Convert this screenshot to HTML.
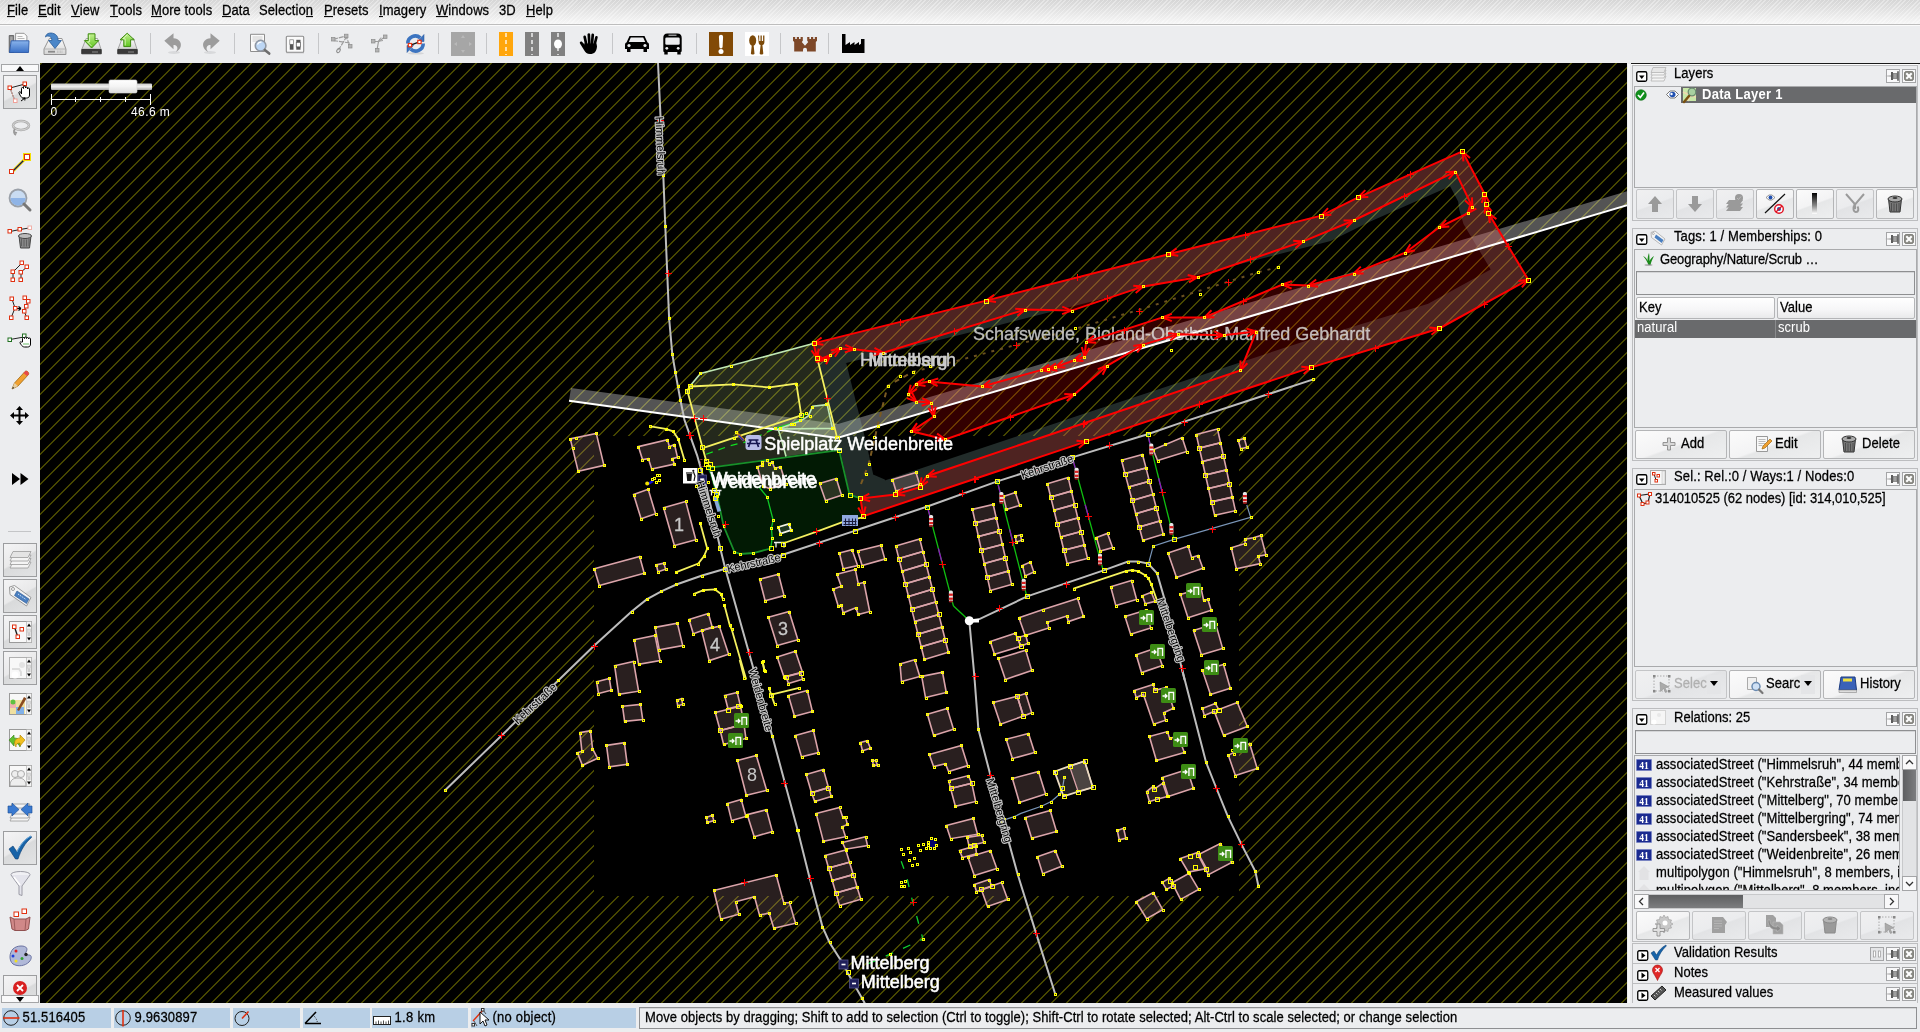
<!DOCTYPE html>
<html lang="en"><head><meta charset="utf-8"><title>Java OpenStreetMap Editor</title>
<style>
*{box-sizing:border-box}
html,body{margin:0;padding:0}
body{-webkit-text-stroke:.25px;width:1920px;height:1032px;overflow:hidden;background:#ecedef;font-family:"Liberation Sans",sans-serif;font-size:13px;color:#000;position:relative}
.a{position:absolute}
.t{position:absolute;white-space:nowrap;line-height:16px;height:16px;letter-spacing:.06px;transform:scaleY(1.06);transform-origin:0 12.300px}
u{text-decoration:none;border-bottom:1px solid #000;display:inline-block;line-height:11px;padding-bottom:0}
#menubar{left:0;top:0;width:1920px;height:24px;background:repeating-linear-gradient(135deg,rgba(255,255,255,.35) 0,rgba(255,255,255,.35) 1px,rgba(255,255,255,0) 1px,rgba(255,255,255,0) 3px),linear-gradient(#d6d6d6,#e2e2e2 40%,#f7f7f7);}
.btn{position:absolute;border:1px solid #b4b5b7;border-radius:2px;background:linear-gradient(160deg,#fbfbfb 0,#f3f3f4 48%,#e6e7e8 52%,#eeeff0 100%)}
.btn.dis{background:linear-gradient(160deg,#f0f0f1 0,#ebecee 48%,#e2e3e5 52%,#e9eaec 100%);border-color:#c4c5c7}
.tog{position:absolute;border:1px solid #9c9d9f;background:linear-gradient(150deg,#f4f4f5 0,#e9e9ea 48%,#d9dadb 52%,#e2e3e4 100%)}
.panel{position:absolute;border:1px solid #bcbdbf;background:#ecedef}
.box{position:absolute;border:1px solid #a9aaac;background:#ecedef}
.sel{position:absolute;background:#696a6c}
.sep{position:absolute;width:1px;background:#c6c7c9}
.stat{position:absolute;top:1008px;height:20px;background:#b8cfe5}
.hdr{position:absolute;border:1px solid #b4b5b7;background:linear-gradient(#ffffff,#f6f6f7 60%,#e9eaeb);border-radius:2px}
.sbtn{position:absolute;border:1px solid #a4a5a7;background:#f9f9fa;border-radius:0}
svg{position:absolute;overflow:visible}
</style></head>
<body>
<div id="root" style="position:absolute;left:0;top:0;width:1920px;height:1032px;will-change:transform">
<div class="a" id="menubar"></div>
<div class="a" style="left:0;top:24px;width:1920px;height:1px;background:#bdbdbd"></div>
<div class="a" style="left:0;top:25px;width:1920px;height:1px;background:#fbfbfb"></div>
<div class="t " style="left:7px;top:3.4000000000000004px;"><u>F</u>ile</div>
<div class="t " style="left:38px;top:3.4000000000000004px;"><u>E</u>dit</div>
<div class="t " style="left:71px;top:3.4000000000000004px;"><u>V</u>iew</div>
<div class="t " style="left:110px;top:3.4000000000000004px;"><u>T</u>ools</div>
<div class="t " style="left:151px;top:3.4000000000000004px;"><u>M</u>ore tools</div>
<div class="t " style="left:222px;top:3.4000000000000004px;"><u>D</u>ata</div>
<div class="t " style="left:259px;top:3.4000000000000004px;">Selectio<u>n</u></div>
<div class="t " style="left:324px;top:3.4000000000000004px;"><u>P</u>resets</div>
<div class="t " style="left:379px;top:3.4000000000000004px;"><u>I</u>magery</div>
<div class="t " style="left:436px;top:3.4000000000000004px;"><u>W</u>indows</div>
<div class="t " style="left:499px;top:3.4000000000000004px;">3D</div>
<div class="t " style="left:526px;top:3.4000000000000004px;"><u>H</u>elp</div>
<div class="sep" style="left:150px;top:33px;height:21px"></div>
<div class="sep" style="left:234px;top:33px;height:21px"></div>
<div class="sep" style="left:318px;top:33px;height:21px"></div>
<div class="sep" style="left:438px;top:33px;height:21px"></div>
<div class="sep" style="left:486px;top:33px;height:21px"></div>
<div class="sep" style="left:612px;top:33px;height:21px"></div>
<div class="sep" style="left:696px;top:33px;height:21px"></div>
<div class="sep" style="left:780px;top:33px;height:21px"></div>
<div class="sep" style="left:828px;top:33px;height:21px"></div>
<svg style="left:8px;top:31px" width="24" height="24" viewBox="0 0 24 24"><defs><linearGradient id="gfo" x1="0" y1="0" x2="0" y2="1"><stop offset="0" stop-color="#8ab4ec"/><stop offset="1" stop-color="#3a70c6"/></linearGradient><linearGradient id="ggr" x1="0" y1="0" x2="0" y2="1"><stop offset="0" stop-color="#c4f090"/><stop offset="1" stop-color="#5cc41c"/></linearGradient><linearGradient id="gdr" x1="0" y1="0" x2="0" y2="1"><stop offset="0" stop-color="#fdfdfd"/><stop offset="1" stop-color="#d4d4d4"/></linearGradient></defs><path d="M1.200 4.500h4.500v17H1.200z" fill="#7c7c7c" stroke="#5a5a5a" stroke-width=".8"/><path d="M2.200 5.500h2.500v15H2.200z" fill="#a4a4a4"/><path d="M7.600 2.300h8.500l2.800 2.800v6H7.600z" fill="#fbfbfb" stroke="#8c8c8c" stroke-width=".9"/><path d="M9.500 5.500h5M9.500 7.500h7" stroke="#b0b0b0" stroke-width=".9"/><path d="M3.200 9.800H21l-.5 11.700H1.500z" fill="url(#gfo)" stroke="#2c5aa8" stroke-width=".9"/></svg>
<svg style="left:43px;top:31px" width="24" height="25" viewBox="0 0 24 25"><path d="M6.400 7.500h12.500L22.900 18v5.500H1V18z" fill="url(#gdr)" stroke="#8a8a8a" stroke-width=".9"/><path d="M1.500 18h21" stroke="#a8a8a8" stroke-width=".8"/>
<rect x="5" y="19.800" width="7" height="1.800" fill="#8a8a8a"/><path d="M14.500 19.500v2.500M16 19.500v2.500M17.500 19.500v2.500M19 19.500v2.500" stroke="#bbb" stroke-width=".7"/>
<path d="M2.500 6C3 1.500 9 1 12.500 3.500c2 1.500 2.600 3.500 2.600 6h3.300L12 17.500 5.600 9.500h3.300c0-2.500-1.500-4.500-4-4.500-1 0-2 .5-2.400 1z" fill="#4a86c8" stroke="#2a5c98" stroke-width=".8"/></svg>
<svg style="left:80px;top:31px" width="24" height="24" viewBox="0 0 24 24"><path d="M6.200 7.500h11.300L21 18.200H1.900z" fill="url(#gdr)" stroke="#9a9a9a" stroke-width=".9"/><path d="M1.700 18.500h19.600v4.300H1.700z" fill="#3a3a3a" stroke="#2a2a2a" stroke-width=".8"/><path d="M12 21h6" stroke="#8a8a8a" stroke-width="1"/>
<path d="M8.200 2.800h6.800v6.800h3.700L11.600 17 4.400 9.600h3.800z" fill="url(#ggr)" stroke="#3e8c10" stroke-width="1"/><path d="M9.600 4v6.800H7.500l4.100 4.300" fill="none" stroke="#e4f8c8" stroke-width=".8"/></svg>
<svg style="left:116px;top:31px" width="24" height="24" viewBox="0 0 24 24"><path d="M6.200 7.500h11.300L21 18.200H1.900z" fill="url(#gdr)" stroke="#9a9a9a" stroke-width=".9"/><path d="M1.700 18.500h19.600v4.300H1.700z" fill="#3a3a3a" stroke="#2a2a2a" stroke-width=".8"/><path d="M12 21h6" stroke="#8a8a8a" stroke-width="1"/>
<path d="M7.800 15.600h6.800V8.800h3.700L11.200 2.200 4 8.800h3.800z" fill="url(#ggr)" stroke="#3e8c10" stroke-width="1"/><path d="M9.200 14.500V7.800H7l4.200-3.900" fill="none" stroke="#e4f8c8" stroke-width=".8"/></svg>
<svg style="left:163px;top:32px" width="20" height="24" viewBox="0 0 20 24"><ellipse cx="11" cy="20.500" rx="6" ry="1.500" fill="#d8d9db"/><path d="M1.300 8.800L10.500 1.200v5c5.500.3 8.300 4.200 7.200 8.300-.6 2.400-2.600 4.600-5 5.500 1.800-1.800 2.200-4 1.200-5.500-.8-1.200-2-1.600-3.400-1.600v4.300z" fill="#9c9c9c"/></svg>
<svg style="left:201px;top:32px" width="20" height="24" viewBox="0 0 20 24"><ellipse cx="9" cy="20.500" rx="6" ry="1.500" fill="#d8d9db"/><path d="M18.700 8.800L9.500 1.200v5c-5.500.3-8.300 4.200-7.200 8.300.6 2.400 2.600 4.600 5 5.500-1.800-1.800-2.200-4-1.200-5.500.8-1.200 2-1.600 3.400-1.600v4.300z" fill="#9c9c9c"/></svg>
<svg style="left:249px;top:32px" width="23" height="23" viewBox="0 0 23 23"><path d="M1.500 2.300h14v17.200h-14z" fill="#fafafa" stroke="#8e8e8e" stroke-width="1"/><path d="M3.500 5h10M3.500 7h10M3.500 9h5" stroke="#c8c8c8" stroke-width=".9"/>
<circle cx="11.600" cy="13.700" r="5.300" fill="#bcd6f4" stroke="#9098a4" stroke-width="1.600"/><path d="M8.500 12.500a3.500 3.500 0 0 1 4-2.300" stroke="#fff" stroke-width="1.200" fill="none"/><path d="M15.800 18l4.400 3.600" stroke="#6e6e6e" stroke-width="2.600" stroke-linecap="round"/></svg>
<svg style="left:285px;top:35px" width="20" height="20" viewBox="0 0 20 20"><rect x="1.500" y="17" width="17.500" height="1.500" fill="#cfd0d2"/><rect x="1.300" y="1.300" width="17.400" height="16" rx="1" fill="#fafafa" stroke="#8c8c8c" stroke-width="1.100"/>
<rect x="4.800" y="4.800" width="3.700" height="4.500" fill="#fff" stroke="#777" stroke-width=".7"/><rect x="4.800" y="9.300" width="3.700" height="5.400" fill="#555"/>
<rect x="11.300" y="4.800" width="4.200" height="2.600" fill="#555"/><rect x="11.300" y="7.400" width="4.200" height="4.500" fill="#fff" stroke="#666" stroke-width=".8"/><rect x="11.300" y="11.900" width="4.200" height="2.800" fill="#555"/></svg>
<svg style="left:330px;top:33px" width="24" height="22" viewBox="0 0 24 22"><path d="M3 6.500l13-3.500 4 10.500M3 7.500l17 2.500M17 3L8.500 17" stroke="#9c9c9c" stroke-width="1.200" fill="none" stroke-dasharray="5 1"/><ellipse cx="8.500" cy="17.500" rx="1.500" ry="2.300" fill="none" stroke="#8a8a8a" stroke-width="1" transform="rotate(30 8.500 17.500)"/>
<g fill="#b4b4b4" stroke="#8c8c8c" stroke-width=".7"><rect x="1.500" y="4.500" width="3.500" height="3.500"/><rect x="14.500" y="1.200" width="3.500" height="3.500"/><rect x="18.500" y="11.500" width="3.500" height="3.500"/></g></svg>
<svg style="left:369px;top:34px" width="20" height="20" viewBox="0 0 20 20"><path d="M4.500 7.500l5 0 7-5M9.500 7.500l-1.500 8.500" stroke="#9c9c9c" stroke-width="1.200" fill="none"/><path d="M12 3.500l-2.500 3.500M14 6.500l-4.500.8" stroke="#9c9c9c" stroke-width="1"/>
<g fill="#b4b4b4" stroke="#8c8c8c" stroke-width=".7"><rect x="2.500" y="5.500" width="3.500" height="3.500"/><rect x="14.500" y="1" width="3.500" height="3.500"/><rect x="6.500" y="14.500" width="3.500" height="3.500"/></g></svg>
<svg style="left:404px;top:32px" width="23" height="23" viewBox="0 0 23 23"><ellipse cx="12" cy="21.300" rx="8" ry="1.200" fill="#d4d5d7"/>
<path d="M3.800 11.500a7.500 7.500 0 0 1 12.500-5.600" fill="none" stroke="#3c74c0" stroke-width="3.600"/><path d="M19.200 11.500a7.500 7.500 0 0 1-12.500 5.600" fill="none" stroke="#3c74c0" stroke-width="3.600"/>
<path d="M13.500 9.500h6.500V2.500z" fill="#3c74c0" stroke="#1f4e94" stroke-width=".5"/><path d="M9.500 13.500H3v7z" fill="#3c74c0" stroke="#1f4e94" stroke-width=".5"/>
<path d="M6.500 13.200l9-3.300" stroke="#111" stroke-width="1.300"/><rect x="4.300" y="11.500" width="3.300" height="3.300" fill="#fff" stroke="#e63312" stroke-width="1.200"/><rect x="13.800" y="8.300" width="3.300" height="3.300" fill="#fff" stroke="#e63312" stroke-width="1.200"/></svg>
<div class="a" style="left:451px;top:32px;width:24px;height:24px;background:#a6a6a6"></div>
<svg style="left:451px;top:32px" width="24" height="24" viewBox="0 0 24 24"><path d="M12 3l2 3h-4zM12 21l2-3h-4zM3 12l3-2v4zM21 12l-3-2v4z" fill="#b9b9b9"/></svg>
<div class="a" style="left:499px;top:32px;width:14px;height:24px;background:#ffa60c"></div>
<svg style="left:499px;top:32px" width="14" height="24" viewBox="0 0 14 24"><path d="M7 1v22" stroke="#fff" stroke-width="1.300" stroke-dasharray="4 3"/></svg>
<div class="a" style="left:525px;top:32px;width:14px;height:24px;background:#808080"></div>
<svg style="left:525px;top:32px" width="14" height="24" viewBox="0 0 14 24"><path d="M7 1v22" stroke="#fff" stroke-width="1.300" stroke-dasharray="4 3"/></svg>
<div class="a" style="left:551px;top:32px;width:14px;height:24px;background:#808080"></div>
<svg style="left:551px;top:32px" width="14" height="24" viewBox="0 0 14 24"><path d="M7 1v22" stroke="#fff" stroke-width="1.300" stroke-dasharray="4 3"/><ellipse cx="7" cy="12" rx="4" ry="4.500" fill="#fff"/></svg>
<svg style="left:579px;top:32px" width="22" height="24" viewBox="0 0 22 24"><g fill="#000"><rect x="5.200" y="3.500" width="2.700" height="11" rx="1.350" transform="rotate(-12 6.500 9)"/><rect x="8.700" y="1.200" width="2.700" height="12" rx="1.350" transform="rotate(-3 10 7)"/><rect x="12" y="1.500" width="2.700" height="12" rx="1.350" transform="rotate(5 13.300 7.500)"/><rect x="15.200" y="3.800" width="2.600" height="10.500" rx="1.300" transform="rotate(14 16.500 9)"/>
<path d="M5 11.500l12.500 0 .5 3c-.5 5-2.500 7.500-7 7.500-3 0-4.500-1.500-6-4l-4-6.500c-.8-1.500 1-2.700 2.200-1.500l2.800 3z"/></g></svg>
<svg style="left:625px;top:35px" width="24" height="18" viewBox="0 0 24 18"><path d="M4.500 1h15l3 6.500c1 .3 1.500 1 1.500 2.500v4h-2v3h-3.500v-3H5.500v3H2v-3H0v-4c0-1.500.5-2.200 1.500-2.500z" fill="#000"/>
<path d="M5.800 2.500h12.400l2 4.500H3.800z" fill="#ecedef"/><circle cx="4" cy="10.500" r="1.600" fill="#ecedef"/><circle cx="20" cy="10.500" r="1.600" fill="#ecedef"/></svg>
<svg style="left:663px;top:33px" width="20" height="23" viewBox="0 0 20 23"><path d="M4.500 .5h10c3 0 4.200 1.500 4.200 4.500v12.500c0 1-.4 1.500-1 1.500v2.500h-3.400V19h-9.600v2.500H1.300V19c-.6 0-1-.5-1-1.500V5c0-3 1.200-4.500 4.200-4.500z" fill="#000"/>
<path d="M5.500 2.200h8" stroke="#ecedef" stroke-width=".9"/><rect x="2.300" y="4.500" width="14.400" height="7.200" rx="1.300" fill="#ecedef"/><circle cx="3.800" cy="15.300" r="1.400" fill="#ecedef"/><circle cx="15.200" cy="15.300" r="1.400" fill="#ecedef"/></svg>
<div class="a" style="left:709px;top:32px;width:24px;height:24px;background:#824a06"></div>
<svg style="left:709px;top:32px" width="24" height="24" viewBox="0 0 24 24"><path d="M9.900 4.800a2.100 2.100 0 0 1 4.200 0l-.5 10a1.600 1.600 0 0 1-3.200 0z" fill="#fff"/><circle cx="12" cy="19.600" r="2.500" fill="#fff"/></svg>
<div class="a" style="left:745px;top:32px;width:24px;height:24px;background:#fff"></div>
<svg style="left:745px;top:32px" width="24" height="24" viewBox="0 0 24 24"><ellipse cx="7.700" cy="8.500" rx="3.500" ry="5.300" fill="#7c4a0a"/><path d="M6.800 13h1.800l.9 8.500c0 1.300-3.600 1.300-3.600 0z" fill="#7c4a0a"/>
<path d="M13 3.500h1.200v5.500h1.300V3.500h1.300v5.500h1.300V3.500h1.300v6.800c0 1.700-1 2.500-2 2.700l.9 8.500c0 1.300-3.600 1.300-3.600 0l.9-8.500c-1-.2-2-1-2-2.700z" fill="#7c4a0a"/></svg>
<svg style="left:793px;top:37px" width="24" height="15" viewBox="0 0 24 15"><path d="M0 0h2.200v2h1.600V0h2.200v2h1.600V0h2.200v3.800L8.800 5l3.200 3.800L15.200 5l-1-1.200V0h2.200v2h1.600V0h2.200v2h1.600V0H24v3.800L22.800 5v9.500H14V12.800a2 2 0 0 0-4 0v1.700H1.200V5L0 3.800z" fill="#7e4828"/></svg>
<svg style="left:842px;top:34px" width="23" height="19" viewBox="0 0 23 19"><path d="M0 0h3.500v11l4.500-3v3l4.500-3v3l4.500-3v3l2-1.300V5h3.500v14H0z" fill="#000"/></svg>
<svg style="left:40px;top:63px" width="1587" height="940" viewBox="40 63 1587 940" font-family="Liberation Sans,sans-serif" style="-webkit-text-stroke:0">
<defs><pattern id="hatch" patternUnits="userSpaceOnUse" x="0" y="0" width="15" height="15"><path d="M-1 15.500L15.500 -1M-1 30.500L30.500 -1M-16 15.500L.5 -1" stroke="#5f5f00" stroke-width="1.120"/></pattern><clipPath id="mc"><rect x="40" y="63" width="1587" height="940"/></clipPath></defs>
<g clip-path="url(#mc)">
<rect x="40" y="63" width="1587" height="940" fill="#000"/>
<path fill-rule="evenodd" fill="url(#hatch)" d="M40 63h1587v940H40zM594 436h645v460H594z"/>
<polygon points="708.3,467.9 839.1,450.1 849.5,494.6 860.5,498.3 863.3,516.2 845.8,520.8 782.8,543.5 770.7,548.5 753.3,553 740.4,554 734.4,551.8 723.5,525.8 717.2,495.6 711,474" fill="rgba(8,110,16,.24)"/>
<polygon points="571,388 838,424 1640,187.500 1640,201.500 837.200,438 569,400.800" fill="rgba(255,255,255,.33)"/>
<polygon points="813.4,343.4 731.4,365.6 700.5,373.4 690.4,385.5 687.3,390.7 702.5,447.4 707.6,467.6 839.8,448.7 837.3,438.6 817.3,358.5" fill="rgba(190,220,150,.19)"/>
<polygon points="827.2,404.6 812.6,406.3 808.3,415.9 800.8,420.9 792,424 778.1,429 832.5,428.4" fill="rgba(190,230,170,.25)"/>
<polygon points="778.1,429 781.9,441.1 786,456.5 839.8,448.7 837.3,438.1 832.5,428.4" fill="rgba(190,230,170,.18)"/>
<clipPath id="mclip"><polygon points="1462.4,151.4 1358.3,197.3 1321.3,215.6 1168.4,254.3 986.1,300.6 813.5,343.4 817.3,358.5 837.3,438.5 840,449 849.8,494 860.5,498.5 863.3,516.2 1086.5,441.4 1311.3,367.4 1439.3,328.5 1528.2,279.7 1488.4,213.1 1485.6,203.6 1484.4,193.5"/></clipPath>
<polygon points="1462.4,151.4 1358.3,197.3 1321.3,215.6 1168.4,254.3 986.1,300.6 813.5,343.4 817.3,358.5 837.3,438.5 840,449 849.8,494 860.5,498.5 863.3,516.2 1086.5,441.4 1311.3,367.4 1439.3,328.5 1528.2,279.7 1488.4,213.1 1485.6,203.6 1484.4,193.5" fill="none" stroke="rgba(170,220,210,.2)" stroke-width="54" stroke-linejoin="miter" clip-path="url(#mclip)"/>
<polygon points="1462.4,151.4 1358.3,197.3 1321.3,215.6 1168.4,254.3 986.1,300.6 813.5,343.4 817.3,358.5 825.4,359.8 830.4,355.2 840.5,348.4 854.3,349.2 883.3,352.7 1025.2,309.6 1071.5,310.6 1143.3,286.4 1197.5,277.2 1303.2,241.4 1353.6,220.5 1455.4,171.6 1472.5,207.4 1467.5,213.4 1439.3,227.3 1405.2,252.7 1353.6,273.6 1308.2,285.5 1282.5,284.5 1204.4,317.4 1162.5,317.4 1086.1,342.1 1084.4,356.7 1073.5,360.5 1055.4,367.3 1047.6,368.8 1040.8,370.1 982.3,386.5 928.7,381.4 915.6,384.2 908.5,394.5 916.3,401.6 931.2,402.6 933.7,416.5 911.3,431.3 945.3,439.4 1074.3,394.5 1107.1,365.8 1143.3,344.6 1178.1,334.3 1223.5,335.3 1256.2,331.5 1240.5,370.4 926.8,476.2 919.8,487.2 895.3,494.5 860.5,498.5 863.3,516.2 1086.5,441.4 1311.3,367.4 1439.3,328.5 1528.2,279.7 1488.4,213.1 1485.6,203.6 1484.4,193.5" fill="rgba(255,0,0,.2)"/>
<polygon points="570.3,438.9 596.3,433.4 603.9,465.4 578.2,471.4" fill="rgba(204,153,153,.2)" stroke="none"/>
<polygon points="638.4,446.6 667.4,439.6 669.4,446.6 674.5,444.6 677.5,457.4 672.4,458.6 674.4,464.1 651.7,469.1 648.4,458.6 642.5,459.5" fill="rgba(204,153,153,.2)" stroke="none"/>
<polygon points="633.6,494.6 648.2,489.3 655.5,513.7 641.1,518.8" fill="rgba(204,153,153,.2)" stroke="none"/>
<polygon points="663.6,507.7 685.7,501.4 695.8,539.7 674.4,545.5" fill="rgba(204,153,153,.2)" stroke="none"/>
<polygon points="594.3,568.7 639.6,556.6 644.2,573.2 599.3,585.5" fill="rgba(204,153,153,.2)" stroke="none"/>
<polygon points="656.3,564.9 663.8,563.1 665.6,569.2 658,571.7" fill="rgba(204,153,153,.2)" stroke="none"/>
<polygon points="689,619.6 708.4,613.5 712.2,627.1 693.3,633.7" fill="rgba(204,153,153,.2)" stroke="none"/>
<polygon points="701.6,630.4 719.3,626.1 728.6,654.3 709.2,660.6" fill="rgba(204,153,153,.2)" stroke="none"/>
<polygon points="655,627.4 677.4,623.1 682.7,645.5 659.3,649.8" fill="rgba(204,153,153,.2)" stroke="none"/>
<polygon points="634.1,639.7 655,635.4 660,660.6 638.6,664.4" fill="rgba(204,153,153,.2)" stroke="none"/>
<polygon points="768.4,617.3 789.1,611.5 797.9,639.7 777.2,645.5" fill="rgba(204,153,153,.2)" stroke="none"/>
<polygon points="759.6,579.2 778.5,574.2 784,595.6 765.1,600.7" fill="rgba(204,153,153,.2)" stroke="none"/>
<polygon points="839.4,553 852,549.8 857.6,565.6 843.2,568.7" fill="rgba(204,153,153,.2)" stroke="none"/>
<polygon points="857.6,551 881,545.2 884.8,559.1 862.1,565.6" fill="rgba(204,153,153,.2)" stroke="none"/>
<polygon points="836.9,574.2 855.3,569.4 858.3,583.8 863.9,582.5 869.7,611.5 858.3,614.5 855.8,607.7 843.2,612.8 841.2,605.2 838.2,606 833.1,589.3 841.2,586.3" fill="rgba(204,153,153,.2)" stroke="none"/>
<polygon points="614.6,665.7 633.5,661.5 638.6,691.2 618.7,694.4" fill="rgba(204,153,153,.2)" stroke="none"/>
<polygon points="596.6,681.7 609.3,678.5 611.2,690.2 598.5,693.6" fill="rgba(204,153,153,.2)" stroke="none"/>
<polygon points="622.5,706.3 640.5,704.4 642.7,719.5 624.6,721.4" fill="rgba(204,153,153,.2)" stroke="none"/>
<polygon points="606.5,745.4 624.4,742.6 627.2,764.3 609.3,766.8" fill="rgba(204,153,153,.2)" stroke="none"/>
<polygon points="579.9,732.6 590.5,730.6 592.5,748.7 597.6,758.3 582.4,765.3 577.4,752.7 581.9,751.2" fill="rgba(204,153,153,.2)" stroke="none"/>
<polygon points="676.8,700.3 681.7,698.6 682.6,704.4 677.7,705.7" fill="rgba(204,153,153,.2)" stroke="none"/>
<polygon points="706.2,817.4 712.3,815.3 713.8,820.6 707.4,822.5" fill="rgba(204,153,153,.2)" stroke="none"/>
<polygon points="724.6,695.5 737.2,692.5 740.3,705.4 728,708.8" fill="rgba(204,153,153,.2)" stroke="none"/>
<polygon points="715.3,712.5 740.6,706.3 744,724.3 720.2,730.5" fill="rgba(204,153,153,.2)" stroke="none"/>
<polygon points="720.2,730.5 744,724.3 745.9,738.4 723.6,744.5" fill="rgba(204,153,153,.2)" stroke="none"/>
<polygon points="737.4,760.5 756.3,755.4 766.7,790.4 746.3,795.3" fill="rgba(204,153,153,.2)" stroke="none"/>
<polygon points="727.4,803.6 741.2,799.5 745.9,816.5 731.6,820.6" fill="rgba(204,153,153,.2)" stroke="none"/>
<polygon points="747.2,814.6 766.5,809.7 772.4,831.6 754.2,836.7" fill="rgba(204,153,153,.2)" stroke="none"/>
<polygon points="777.2,656.9 795.4,651.3 802.4,672 784,677" fill="rgba(204,153,153,.2)" stroke="none"/>
<polygon points="786,676.6 800.7,672.9 802.6,679.3 788.4,683.6" fill="rgba(204,153,153,.2)" stroke="none"/>
<polygon points="788.4,695.5 807.3,690.6 812.4,711.4 794.5,716.3" fill="rgba(204,153,153,.2)" stroke="none"/>
<polygon points="795.4,735.6 813.4,730.5 818.5,752.6 801.5,756.8" fill="rgba(204,153,153,.2)" stroke="none"/>
<polygon points="806.2,774.5 823.4,769.6 828.5,787.6 811.5,792.7" fill="rgba(204,153,153,.2)" stroke="none"/>
<polygon points="811.5,792.7 828.5,787.6 831.3,796.4 814.7,801.4" fill="rgba(204,153,153,.2)" stroke="none"/>
<polygon points="816.2,813.6 839.5,807.4 842.7,817.2 845.5,817.2 847.4,824.4 842.3,826.7 845.5,836.7 823.4,841.4" fill="rgba(204,153,153,.2)" stroke="none"/>
<polygon points="860.4,742.6 867.2,740.7 870.5,748.3 862.5,750.7" fill="rgba(204,153,153,.2)" stroke="none"/>
<polygon points="872.5,760.5 875.7,760.5 877.6,765.4 873.3,765.4" fill="rgba(204,153,153,.2)" stroke="none"/>
<polygon points="895.7,546 919.7,538.9 922.9,551.5 898.9,558.6" fill="rgba(204,153,153,.2)" stroke="none"/>
<polygon points="898.9,558.6 922.9,551.5 926.1,564.1 902.1,571.2" fill="rgba(204,153,153,.2)" stroke="none"/>
<polygon points="902.1,571.2 926.1,564.1 929.3,576.7 905.3,583.8" fill="rgba(204,153,153,.2)" stroke="none"/>
<polygon points="905.3,583.8 929.3,576.7 932.5,589.3 908.5,596.4" fill="rgba(204,153,153,.2)" stroke="none"/>
<polygon points="908.5,596.4 932.5,589.3 935.6,601.9 911.6,609" fill="rgba(204,153,153,.2)" stroke="none"/>
<polygon points="911.6,609 935.6,601.9 938.8,614.5 914.8,621.6" fill="rgba(204,153,153,.2)" stroke="none"/>
<polygon points="914.8,621.6 938.8,614.5 942,627.1 918,634.2" fill="rgba(204,153,153,.2)" stroke="none"/>
<polygon points="918,634.2 942,627.1 945.2,639.7 921.2,646.8" fill="rgba(204,153,153,.2)" stroke="none"/>
<polygon points="921.2,646.8 945.2,639.7 948.4,652.3 924.4,659.4" fill="rgba(204,153,153,.2)" stroke="none"/>
<polygon points="972.4,509.4 993.2,504.5 996.2,517.8 975.4,522.9" fill="rgba(204,153,153,.2)" stroke="none"/>
<polygon points="975.4,522.9 996.2,517.8 999.3,531.1 978.4,536.5" fill="rgba(204,153,153,.2)" stroke="none"/>
<polygon points="978.4,536.5 999.3,531.1 1002.4,544.5 981.3,550" fill="rgba(204,153,153,.2)" stroke="none"/>
<polygon points="981.3,550 1002.4,544.5 1005.4,557.8 984.3,563.5" fill="rgba(204,153,153,.2)" stroke="none"/>
<polygon points="984.3,563.5 1005.4,557.8 1008.5,571.1 987.3,577.1" fill="rgba(204,153,153,.2)" stroke="none"/>
<polygon points="987.3,577.1 1008.5,571.1 1011.5,584.4 990.3,590.6" fill="rgba(204,153,153,.2)" stroke="none"/>
<polygon points="1047.4,483.7 1068.2,477.6 1071.4,491.1 1050.7,497" fill="rgba(204,153,153,.2)" stroke="none"/>
<polygon points="1050.7,497 1071.4,491.1 1074.6,504.6 1054,510.3" fill="rgba(204,153,153,.2)" stroke="none"/>
<polygon points="1054,510.3 1074.6,504.6 1077.8,518 1057.3,523.6" fill="rgba(204,153,153,.2)" stroke="none"/>
<polygon points="1057.3,523.6 1077.8,518 1081.1,531.5 1060.6,537" fill="rgba(204,153,153,.2)" stroke="none"/>
<polygon points="1060.6,537 1081.1,531.5 1084.3,545 1063.9,550.3" fill="rgba(204,153,153,.2)" stroke="none"/>
<polygon points="1063.9,550.3 1084.3,545 1087.5,558.5 1067.2,563.6" fill="rgba(204,153,153,.2)" stroke="none"/>
<polygon points="1121.5,460.3 1142.5,454.6 1146,467.9 1125,473.6" fill="rgba(204,153,153,.2)" stroke="none"/>
<polygon points="1125,473.6 1146,467.9 1149.4,481.2 1128.6,487" fill="rgba(204,153,153,.2)" stroke="none"/>
<polygon points="1128.6,487 1149.4,481.2 1152.8,494.4 1132.2,500.4" fill="rgba(204,153,153,.2)" stroke="none"/>
<polygon points="1132.2,500.4 1152.8,494.4 1156.3,507.7 1135.7,513.7" fill="rgba(204,153,153,.2)" stroke="none"/>
<polygon points="1135.7,513.7 1156.3,507.7 1159.8,521 1139.2,527" fill="rgba(204,153,153,.2)" stroke="none"/>
<polygon points="1139.2,527 1159.8,521 1163.2,534.3 1142.8,540.4" fill="rgba(204,153,153,.2)" stroke="none"/>
<polygon points="1196.3,434.6 1217.5,429.1 1220.5,442.7 1199.3,448.1" fill="rgba(204,153,153,.2)" stroke="none"/>
<polygon points="1199.3,448.1 1220.5,442.7 1223.5,456.3 1202.4,461.5" fill="rgba(204,153,153,.2)" stroke="none"/>
<polygon points="1202.4,461.5 1223.5,456.3 1226.5,469.9 1205.4,475" fill="rgba(204,153,153,.2)" stroke="none"/>
<polygon points="1205.4,475 1226.5,469.9 1229.4,483.5 1208.5,488.5" fill="rgba(204,153,153,.2)" stroke="none"/>
<polygon points="1208.5,488.5 1229.4,483.5 1232.4,497.1 1211.5,501.9" fill="rgba(204,153,153,.2)" stroke="none"/>
<polygon points="1211.5,501.9 1232.4,497.1 1235.4,510.7 1214.6,515.4" fill="rgba(204,153,153,.2)" stroke="none"/>
<polygon points="1153.2,449.7 1182.1,437.6 1186.7,451.6 1157.6,460.6" fill="rgba(204,153,153,.2)" stroke="none"/>
<polygon points="1003.4,496.5 1015.3,492.4 1019.6,505.4 1006.4,509.4" fill="rgba(204,153,153,.2)" stroke="none"/>
<polygon points="1015.3,536.2 1020.6,534.9 1021.5,540.4 1016.2,541.9" fill="rgba(204,153,153,.2)" stroke="none"/>
<polygon points="1022.5,565.5 1030.4,562.1 1033.8,572.1 1025.1,575.9" fill="rgba(204,153,153,.2)" stroke="none"/>
<polygon points="1096.5,537.5 1107.5,533.4 1112.6,547.6 1100.3,551" fill="rgba(204,153,153,.2)" stroke="none"/>
<polygon points="1238.3,440.4 1244.3,438.3 1246.8,447.4 1240.7,448.7" fill="rgba(204,153,153,.2)" stroke="none"/>
<polygon points="1168,552.9 1188.2,546.2 1191.6,557.6 1198.2,555.5 1202.9,568.3 1176.5,577.4" fill="rgba(204,153,153,.2)" stroke="none"/>
<polygon points="1231.3,547.7 1245.2,543.5 1244.7,539.2 1253.5,537.7 1260.8,535.4 1265.9,554.8 1258.3,556.1 1260.3,563.6 1236.4,568.7" fill="rgba(204,153,153,.2)" stroke="none"/>
<polygon points="1110.7,586.7 1131.5,580.6 1136.6,599.5 1115.8,605.6" fill="rgba(204,153,153,.2)" stroke="none"/>
<polygon points="1142.5,595.7 1151.3,592.3 1155.1,601.4 1145.3,603.7" fill="rgba(204,153,153,.2)" stroke="none"/>
<polygon points="1180.4,594.4 1201.1,588.3 1203.6,600.2 1207.9,599.4 1211.2,610.2 1188,617.8" fill="rgba(204,153,153,.2)" stroke="none"/>
<polygon points="1018.9,617.8 1043.1,609.5 1077.6,598.4 1083.4,616.5 1068.3,621.6 1066.8,616 1047.4,622.3 1048.7,627.9 1025.2,635.4" fill="rgba(204,153,153,.2)" stroke="none"/>
<polygon points="900,664.1 914.7,659.8 919.8,676.4 901.5,681.5" fill="rgba(204,153,153,.2)" stroke="none"/>
<polygon points="921.7,676.4 942.5,672.3 946.3,692.5 925.5,697.6" fill="rgba(204,153,153,.2)" stroke="none"/>
<polygon points="927.4,714.2 947.2,708.5 953.5,729.3 933.6,735.4" fill="rgba(204,153,153,.2)" stroke="none"/>
<polygon points="929.3,754.5 961.4,745.4 967.7,765.6 948.6,771.5 945.4,763.7 933.6,766.6" fill="rgba(204,153,153,.2)" stroke="none"/>
<polygon points="948.6,780.7 968.4,775.6 971.8,783.2 950.6,788.5" fill="rgba(204,153,153,.2)" stroke="none"/>
<polygon points="950.6,788.5 971.8,783.2 975.6,801.5 955.4,806.4" fill="rgba(204,153,153,.2)" stroke="none"/>
<polygon points="990.3,641.5 1015.3,633.3 1020.9,646.2 994.5,654.3" fill="rgba(204,153,153,.2)" stroke="none"/>
<polygon points="1017.5,637.7 1025.7,635.2 1027.9,643.3 1020.9,646.2" fill="rgba(204,153,153,.2)" stroke="none"/>
<polygon points="998.3,658.5 1025.7,650.3 1031.7,670.4 1005.4,679.6" fill="rgba(204,153,153,.2)" stroke="none"/>
<polygon points="993.2,702.5 1017.2,696.3 1023.4,716.1 1000.5,724.2" fill="rgba(204,153,153,.2)" stroke="none"/>
<polygon points="1017.2,696.3 1025.7,693.4 1031.7,712.7 1023.4,716.1" fill="rgba(204,153,153,.2)" stroke="none"/>
<polygon points="1006.2,739.3 1028.5,733.5 1034.6,752.4 1012.4,758.6" fill="rgba(204,153,153,.2)" stroke="none"/>
<polygon points="1012.4,778.5 1038.5,771.5 1045.5,794.1 1019.4,802.5" fill="rgba(204,153,153,.2)" stroke="none"/>
<polygon points="1136.2,654.7 1156.1,648.1 1162.3,665.5 1141.5,672.6" fill="rgba(204,153,153,.2)" stroke="none"/>
<polygon points="1134.3,690.6 1153.2,684.5 1155.1,690.2 1166.5,687.4 1173.4,708.2 1163.6,712.7 1165.5,720.3 1153.6,724.2 1143.4,694.4 1136.2,697.6" fill="rgba(204,153,153,.2)" stroke="none"/>
<polygon points="1149.4,736.5 1167.4,731.6 1169.7,738.4 1177.8,735.9 1184.4,752.4 1156.4,760.5" fill="rgba(204,153,153,.2)" stroke="none"/>
<polygon points="1162.3,777.5 1187.2,769.6 1193.3,788.3 1168.3,796.4" fill="rgba(204,153,153,.2)" stroke="none"/>
<polygon points="1146.6,791.7 1153.2,786.4 1154.2,789.2 1162.7,783.2 1167.4,796.4 1157,799.3 1149.4,801.5" fill="rgba(204,153,153,.2)" stroke="none"/>
<polygon points="1193.5,630.5 1215.6,623.5 1222.6,648.4 1201.4,654.7" fill="rgba(204,153,153,.2)" stroke="none"/>
<polygon points="1202.4,670.4 1223.5,664.5 1230.3,688.3 1210.5,694.4" fill="rgba(204,153,153,.2)" stroke="none"/>
<polygon points="1202.4,708.5 1215.2,703.4 1218.8,709.5 1237.3,702.5 1247.3,726.5 1223.5,735.4 1214.3,711.4 1204.3,715.5" fill="rgba(204,153,153,.2)" stroke="none"/>
<polygon points="1228.4,755.4 1249.6,743.5 1257.2,768.4 1235.4,775.6" fill="rgba(204,153,153,.2)" stroke="none"/>
<polygon points="1125,616.5 1145.7,610.2 1150.7,627.9 1130.6,634.2" fill="rgba(204,153,153,.2)" stroke="none"/>
<polygon points="946.3,825.5 973.3,818.5 977.5,834.2 950.6,838.7" fill="rgba(204,153,153,.2)" stroke="none"/>
<polygon points="967.1,837.4 981.6,835.1 983.7,842.5 969,845.9" fill="rgba(204,153,153,.2)" stroke="none"/>
<polygon points="959.5,850.6 975.6,845.9 976.5,853.8 962.4,857.6" fill="rgba(204,153,153,.2)" stroke="none"/>
<polygon points="968,857.2 990.3,850.6 996.8,868.6 974.3,875.6" fill="rgba(204,153,153,.2)" stroke="none"/>
<polygon points="974.3,884.6 989.2,879.5 991.7,886.5 976.5,891.6" fill="rgba(204,153,153,.2)" stroke="none"/>
<polygon points="981.3,889.4 1001.5,882.4 1007.7,899.4 987.5,906.4" fill="rgba(204,153,153,.2)" stroke="none"/>
<polygon points="1025.3,817.6 1050.2,810.4 1056.5,831.4 1031.7,838.3" fill="rgba(204,153,153,.2)" stroke="none"/>
<polygon points="1037.4,856.7 1055.3,850.6 1061.6,866.3 1042.7,873.7" fill="rgba(204,153,153,.2)" stroke="none"/>
<polygon points="1117.3,830.4 1123.6,828.3 1125.8,838.3 1119.2,839.7" fill="rgba(204,153,153,.2)" stroke="none"/>
<polygon points="1198.2,854.8 1220.3,843.6 1231.7,862.5 1208.4,874.6" fill="rgba(204,153,153,.2)" stroke="none"/>
<polygon points="1180.3,858.6 1197.6,852.5 1206.5,868.6 1188.2,872" fill="rgba(204,153,153,.2)" stroke="none"/>
<polygon points="1172.1,882.8 1189.1,873.3 1198.6,889.4 1180.6,899.4" fill="rgba(204,153,153,.2)" stroke="none"/>
<polygon points="1162.3,882.4 1169.3,878.4 1173.4,885.6 1166.5,889.4" fill="rgba(204,153,153,.2)" stroke="none"/>
<polygon points="1136.2,901.7 1153.2,892.6 1162.7,909.6 1146.6,918.7" fill="rgba(204,153,153,.2)" stroke="none"/>
<polygon points="713.8,890.5 776.2,875 783.8,903 789.5,902.5 795.5,923.2 773.8,928.2 769.2,913.2 759.5,915 754.5,896.8 735.5,901.8 738.8,914.2 720.8,919.2" fill="rgba(204,153,153,.2)" stroke="none"/>
<polygon points="825,855.5 845.8,850 849.5,862.3 828.6,868" fill="rgba(204,153,153,.2)" stroke="none"/>
<polygon points="828.6,868 849.5,862.3 853.3,874.6 832.2,880.5" fill="rgba(204,153,153,.2)" stroke="none"/>
<polygon points="832.2,880.5 853.3,874.6 857,886.9 835.9,893" fill="rgba(204,153,153,.2)" stroke="none"/>
<polygon points="835.9,893 857,886.9 860.8,899.2 839.5,905.5" fill="rgba(204,153,153,.2)" stroke="none"/>
<polygon points="842.5,842.5 865.5,836.8 867.5,845.5 845.5,849.2" fill="rgba(204,153,153,.2)" stroke="none"/>
<polygon points="757.4,466.7 762.2,465.3 761.6,461.6 767.4,460.1 769,463.5 772.3,462.5 774.7,468.4 780.5,466.7 786,484 769.5,488.6 763,486" fill="rgba(204,153,153,.2)" stroke="none"/>
<polygon points="819.5,483.4 836.3,478.6 841.5,495.3 825.5,500.6" fill="rgba(204,153,153,.2)" stroke="none"/>
<polygon points="892.5,479.5 916,472.5 919.5,484 896,491" fill="rgba(204,153,153,.2)" stroke="none"/>
<polygon points="570.3,438.9 596.3,433.4 603.9,465.4 578.2,471.4" fill="none" stroke="#dba4aa" stroke-width="1.600"/>
<polygon points="638.4,446.6 667.4,439.6 669.4,446.6 674.5,444.6 677.5,457.4 672.4,458.6 674.4,464.1 651.7,469.1 648.4,458.6 642.5,459.5" fill="none" stroke="#dba4aa" stroke-width="1.600"/>
<polygon points="633.6,494.6 648.2,489.3 655.5,513.7 641.1,518.8" fill="none" stroke="#dba4aa" stroke-width="1.600"/>
<polygon points="663.6,507.7 685.7,501.4 695.8,539.7 674.4,545.5" fill="none" stroke="#dba4aa" stroke-width="1.600"/>
<polygon points="594.3,568.7 639.6,556.6 644.2,573.2 599.3,585.5" fill="none" stroke="#dba4aa" stroke-width="1.600"/>
<polygon points="656.3,564.9 663.8,563.1 665.6,569.2 658,571.7" fill="none" stroke="#dba4aa" stroke-width="1.600"/>
<polygon points="689,619.6 708.4,613.5 712.2,627.1 693.3,633.7" fill="none" stroke="#dba4aa" stroke-width="1.600"/>
<polygon points="701.6,630.4 719.3,626.1 728.6,654.3 709.2,660.6" fill="none" stroke="#dba4aa" stroke-width="1.600"/>
<polygon points="655,627.4 677.4,623.1 682.7,645.5 659.3,649.8" fill="none" stroke="#dba4aa" stroke-width="1.600"/>
<polygon points="634.1,639.7 655,635.4 660,660.6 638.6,664.4" fill="none" stroke="#dba4aa" stroke-width="1.600"/>
<polygon points="768.4,617.3 789.1,611.5 797.9,639.7 777.2,645.5" fill="none" stroke="#dba4aa" stroke-width="1.600"/>
<polygon points="759.6,579.2 778.5,574.2 784,595.6 765.1,600.7" fill="none" stroke="#dba4aa" stroke-width="1.600"/>
<polygon points="839.4,553 852,549.8 857.6,565.6 843.2,568.7" fill="none" stroke="#dba4aa" stroke-width="1.600"/>
<polygon points="857.6,551 881,545.2 884.8,559.1 862.1,565.6" fill="none" stroke="#dba4aa" stroke-width="1.600"/>
<polygon points="836.9,574.2 855.3,569.4 858.3,583.8 863.9,582.5 869.7,611.5 858.3,614.5 855.8,607.7 843.2,612.8 841.2,605.2 838.2,606 833.1,589.3 841.2,586.3" fill="none" stroke="#dba4aa" stroke-width="1.600"/>
<polygon points="614.6,665.7 633.5,661.5 638.6,691.2 618.7,694.4" fill="none" stroke="#dba4aa" stroke-width="1.600"/>
<polygon points="596.6,681.7 609.3,678.5 611.2,690.2 598.5,693.6" fill="none" stroke="#dba4aa" stroke-width="1.600"/>
<polygon points="622.5,706.3 640.5,704.4 642.7,719.5 624.6,721.4" fill="none" stroke="#dba4aa" stroke-width="1.600"/>
<polygon points="606.5,745.4 624.4,742.6 627.2,764.3 609.3,766.8" fill="none" stroke="#dba4aa" stroke-width="1.600"/>
<polygon points="579.9,732.6 590.5,730.6 592.5,748.7 597.6,758.3 582.4,765.3 577.4,752.7 581.9,751.2" fill="none" stroke="#dba4aa" stroke-width="1.600"/>
<polygon points="676.8,700.3 681.7,698.6 682.6,704.4 677.7,705.7" fill="none" stroke="#dba4aa" stroke-width="1.600"/>
<polygon points="706.2,817.4 712.3,815.3 713.8,820.6 707.4,822.5" fill="none" stroke="#dba4aa" stroke-width="1.600"/>
<polygon points="724.6,695.5 737.2,692.5 740.3,705.4 728,708.8" fill="none" stroke="#dba4aa" stroke-width="1.600"/>
<polygon points="715.3,712.5 740.6,706.3 744,724.3 720.2,730.5" fill="none" stroke="#dba4aa" stroke-width="1.600"/>
<polygon points="720.2,730.5 744,724.3 745.9,738.4 723.6,744.5" fill="none" stroke="#dba4aa" stroke-width="1.600"/>
<polygon points="737.4,760.5 756.3,755.4 766.7,790.4 746.3,795.3" fill="none" stroke="#dba4aa" stroke-width="1.600"/>
<polygon points="727.4,803.6 741.2,799.5 745.9,816.5 731.6,820.6" fill="none" stroke="#dba4aa" stroke-width="1.600"/>
<polygon points="747.2,814.6 766.5,809.7 772.4,831.6 754.2,836.7" fill="none" stroke="#dba4aa" stroke-width="1.600"/>
<polygon points="777.2,656.9 795.4,651.3 802.4,672 784,677" fill="none" stroke="#dba4aa" stroke-width="1.600"/>
<polygon points="786,676.6 800.7,672.9 802.6,679.3 788.4,683.6" fill="none" stroke="#dba4aa" stroke-width="1.600"/>
<polygon points="788.4,695.5 807.3,690.6 812.4,711.4 794.5,716.3" fill="none" stroke="#dba4aa" stroke-width="1.600"/>
<polygon points="795.4,735.6 813.4,730.5 818.5,752.6 801.5,756.8" fill="none" stroke="#dba4aa" stroke-width="1.600"/>
<polygon points="806.2,774.5 823.4,769.6 828.5,787.6 811.5,792.7" fill="none" stroke="#dba4aa" stroke-width="1.600"/>
<polygon points="811.5,792.7 828.5,787.6 831.3,796.4 814.7,801.4" fill="none" stroke="#dba4aa" stroke-width="1.600"/>
<polygon points="816.2,813.6 839.5,807.4 842.7,817.2 845.5,817.2 847.4,824.4 842.3,826.7 845.5,836.7 823.4,841.4" fill="none" stroke="#dba4aa" stroke-width="1.600"/>
<polygon points="860.4,742.6 867.2,740.7 870.5,748.3 862.5,750.7" fill="none" stroke="#dba4aa" stroke-width="1.600"/>
<polygon points="872.5,760.5 875.7,760.5 877.6,765.4 873.3,765.4" fill="none" stroke="#dba4aa" stroke-width="1.600"/>
<polygon points="895.7,546 919.7,538.9 922.9,551.5 898.9,558.6" fill="none" stroke="#dba4aa" stroke-width="1.600"/>
<polygon points="898.9,558.6 922.9,551.5 926.1,564.1 902.1,571.2" fill="none" stroke="#dba4aa" stroke-width="1.600"/>
<polygon points="902.1,571.2 926.1,564.1 929.3,576.7 905.3,583.8" fill="none" stroke="#dba4aa" stroke-width="1.600"/>
<polygon points="905.3,583.8 929.3,576.7 932.5,589.3 908.5,596.4" fill="none" stroke="#dba4aa" stroke-width="1.600"/>
<polygon points="908.5,596.4 932.5,589.3 935.6,601.9 911.6,609" fill="none" stroke="#dba4aa" stroke-width="1.600"/>
<polygon points="911.6,609 935.6,601.9 938.8,614.5 914.8,621.6" fill="none" stroke="#dba4aa" stroke-width="1.600"/>
<polygon points="914.8,621.6 938.8,614.5 942,627.1 918,634.2" fill="none" stroke="#dba4aa" stroke-width="1.600"/>
<polygon points="918,634.2 942,627.1 945.2,639.7 921.2,646.8" fill="none" stroke="#dba4aa" stroke-width="1.600"/>
<polygon points="921.2,646.8 945.2,639.7 948.4,652.3 924.4,659.4" fill="none" stroke="#dba4aa" stroke-width="1.600"/>
<polygon points="972.4,509.4 993.2,504.5 996.2,517.8 975.4,522.9" fill="none" stroke="#dba4aa" stroke-width="1.600"/>
<polygon points="975.4,522.9 996.2,517.8 999.3,531.1 978.4,536.5" fill="none" stroke="#dba4aa" stroke-width="1.600"/>
<polygon points="978.4,536.5 999.3,531.1 1002.4,544.5 981.3,550" fill="none" stroke="#dba4aa" stroke-width="1.600"/>
<polygon points="981.3,550 1002.4,544.5 1005.4,557.8 984.3,563.5" fill="none" stroke="#dba4aa" stroke-width="1.600"/>
<polygon points="984.3,563.5 1005.4,557.8 1008.5,571.1 987.3,577.1" fill="none" stroke="#dba4aa" stroke-width="1.600"/>
<polygon points="987.3,577.1 1008.5,571.1 1011.5,584.4 990.3,590.6" fill="none" stroke="#dba4aa" stroke-width="1.600"/>
<polygon points="1047.4,483.7 1068.2,477.6 1071.4,491.1 1050.7,497" fill="none" stroke="#dba4aa" stroke-width="1.600"/>
<polygon points="1050.7,497 1071.4,491.1 1074.6,504.6 1054,510.3" fill="none" stroke="#dba4aa" stroke-width="1.600"/>
<polygon points="1054,510.3 1074.6,504.6 1077.8,518 1057.3,523.6" fill="none" stroke="#dba4aa" stroke-width="1.600"/>
<polygon points="1057.3,523.6 1077.8,518 1081.1,531.5 1060.6,537" fill="none" stroke="#dba4aa" stroke-width="1.600"/>
<polygon points="1060.6,537 1081.1,531.5 1084.3,545 1063.9,550.3" fill="none" stroke="#dba4aa" stroke-width="1.600"/>
<polygon points="1063.9,550.3 1084.3,545 1087.5,558.5 1067.2,563.6" fill="none" stroke="#dba4aa" stroke-width="1.600"/>
<polygon points="1121.5,460.3 1142.5,454.6 1146,467.9 1125,473.6" fill="none" stroke="#dba4aa" stroke-width="1.600"/>
<polygon points="1125,473.6 1146,467.9 1149.4,481.2 1128.6,487" fill="none" stroke="#dba4aa" stroke-width="1.600"/>
<polygon points="1128.6,487 1149.4,481.2 1152.8,494.4 1132.2,500.4" fill="none" stroke="#dba4aa" stroke-width="1.600"/>
<polygon points="1132.2,500.4 1152.8,494.4 1156.3,507.7 1135.7,513.7" fill="none" stroke="#dba4aa" stroke-width="1.600"/>
<polygon points="1135.7,513.7 1156.3,507.7 1159.8,521 1139.2,527" fill="none" stroke="#dba4aa" stroke-width="1.600"/>
<polygon points="1139.2,527 1159.8,521 1163.2,534.3 1142.8,540.4" fill="none" stroke="#dba4aa" stroke-width="1.600"/>
<polygon points="1196.3,434.6 1217.5,429.1 1220.5,442.7 1199.3,448.1" fill="none" stroke="#dba4aa" stroke-width="1.600"/>
<polygon points="1199.3,448.1 1220.5,442.7 1223.5,456.3 1202.4,461.5" fill="none" stroke="#dba4aa" stroke-width="1.600"/>
<polygon points="1202.4,461.5 1223.5,456.3 1226.5,469.9 1205.4,475" fill="none" stroke="#dba4aa" stroke-width="1.600"/>
<polygon points="1205.4,475 1226.5,469.9 1229.4,483.5 1208.5,488.5" fill="none" stroke="#dba4aa" stroke-width="1.600"/>
<polygon points="1208.5,488.5 1229.4,483.5 1232.4,497.1 1211.5,501.9" fill="none" stroke="#dba4aa" stroke-width="1.600"/>
<polygon points="1211.5,501.9 1232.4,497.1 1235.4,510.7 1214.6,515.4" fill="none" stroke="#dba4aa" stroke-width="1.600"/>
<polygon points="1153.2,449.7 1182.1,437.6 1186.7,451.6 1157.6,460.6" fill="none" stroke="#dba4aa" stroke-width="1.600"/>
<polygon points="1003.4,496.5 1015.3,492.4 1019.6,505.4 1006.4,509.4" fill="none" stroke="#dba4aa" stroke-width="1.600"/>
<polygon points="1015.3,536.2 1020.6,534.9 1021.5,540.4 1016.2,541.9" fill="none" stroke="#dba4aa" stroke-width="1.600"/>
<polygon points="1022.5,565.5 1030.4,562.1 1033.8,572.1 1025.1,575.9" fill="none" stroke="#dba4aa" stroke-width="1.600"/>
<polygon points="1096.5,537.5 1107.5,533.4 1112.6,547.6 1100.3,551" fill="none" stroke="#dba4aa" stroke-width="1.600"/>
<polygon points="1238.3,440.4 1244.3,438.3 1246.8,447.4 1240.7,448.7" fill="none" stroke="#dba4aa" stroke-width="1.600"/>
<polygon points="1168,552.9 1188.2,546.2 1191.6,557.6 1198.2,555.5 1202.9,568.3 1176.5,577.4" fill="none" stroke="#dba4aa" stroke-width="1.600"/>
<polygon points="1231.3,547.7 1245.2,543.5 1244.7,539.2 1253.5,537.7 1260.8,535.4 1265.9,554.8 1258.3,556.1 1260.3,563.6 1236.4,568.7" fill="none" stroke="#dba4aa" stroke-width="1.600"/>
<polygon points="1110.7,586.7 1131.5,580.6 1136.6,599.5 1115.8,605.6" fill="none" stroke="#dba4aa" stroke-width="1.600"/>
<polygon points="1142.5,595.7 1151.3,592.3 1155.1,601.4 1145.3,603.7" fill="none" stroke="#dba4aa" stroke-width="1.600"/>
<polygon points="1180.4,594.4 1201.1,588.3 1203.6,600.2 1207.9,599.4 1211.2,610.2 1188,617.8" fill="none" stroke="#dba4aa" stroke-width="1.600"/>
<polygon points="1018.9,617.8 1043.1,609.5 1077.6,598.4 1083.4,616.5 1068.3,621.6 1066.8,616 1047.4,622.3 1048.7,627.9 1025.2,635.4" fill="none" stroke="#dba4aa" stroke-width="1.600"/>
<polygon points="900,664.1 914.7,659.8 919.8,676.4 901.5,681.5" fill="none" stroke="#dba4aa" stroke-width="1.600"/>
<polygon points="921.7,676.4 942.5,672.3 946.3,692.5 925.5,697.6" fill="none" stroke="#dba4aa" stroke-width="1.600"/>
<polygon points="927.4,714.2 947.2,708.5 953.5,729.3 933.6,735.4" fill="none" stroke="#dba4aa" stroke-width="1.600"/>
<polygon points="929.3,754.5 961.4,745.4 967.7,765.6 948.6,771.5 945.4,763.7 933.6,766.6" fill="none" stroke="#dba4aa" stroke-width="1.600"/>
<polygon points="948.6,780.7 968.4,775.6 971.8,783.2 950.6,788.5" fill="none" stroke="#dba4aa" stroke-width="1.600"/>
<polygon points="950.6,788.5 971.8,783.2 975.6,801.5 955.4,806.4" fill="none" stroke="#dba4aa" stroke-width="1.600"/>
<polygon points="990.3,641.5 1015.3,633.3 1020.9,646.2 994.5,654.3" fill="none" stroke="#dba4aa" stroke-width="1.600"/>
<polygon points="1017.5,637.7 1025.7,635.2 1027.9,643.3 1020.9,646.2" fill="none" stroke="#dba4aa" stroke-width="1.600"/>
<polygon points="998.3,658.5 1025.7,650.3 1031.7,670.4 1005.4,679.6" fill="none" stroke="#dba4aa" stroke-width="1.600"/>
<polygon points="993.2,702.5 1017.2,696.3 1023.4,716.1 1000.5,724.2" fill="none" stroke="#dba4aa" stroke-width="1.600"/>
<polygon points="1017.2,696.3 1025.7,693.4 1031.7,712.7 1023.4,716.1" fill="none" stroke="#dba4aa" stroke-width="1.600"/>
<polygon points="1006.2,739.3 1028.5,733.5 1034.6,752.4 1012.4,758.6" fill="none" stroke="#dba4aa" stroke-width="1.600"/>
<polygon points="1012.4,778.5 1038.5,771.5 1045.5,794.1 1019.4,802.5" fill="none" stroke="#dba4aa" stroke-width="1.600"/>
<polygon points="1136.2,654.7 1156.1,648.1 1162.3,665.5 1141.5,672.6" fill="none" stroke="#dba4aa" stroke-width="1.600"/>
<polygon points="1134.3,690.6 1153.2,684.5 1155.1,690.2 1166.5,687.4 1173.4,708.2 1163.6,712.7 1165.5,720.3 1153.6,724.2 1143.4,694.4 1136.2,697.6" fill="none" stroke="#dba4aa" stroke-width="1.600"/>
<polygon points="1149.4,736.5 1167.4,731.6 1169.7,738.4 1177.8,735.9 1184.4,752.4 1156.4,760.5" fill="none" stroke="#dba4aa" stroke-width="1.600"/>
<polygon points="1162.3,777.5 1187.2,769.6 1193.3,788.3 1168.3,796.4" fill="none" stroke="#dba4aa" stroke-width="1.600"/>
<polygon points="1146.6,791.7 1153.2,786.4 1154.2,789.2 1162.7,783.2 1167.4,796.4 1157,799.3 1149.4,801.5" fill="none" stroke="#dba4aa" stroke-width="1.600"/>
<polygon points="1193.5,630.5 1215.6,623.5 1222.6,648.4 1201.4,654.7" fill="none" stroke="#dba4aa" stroke-width="1.600"/>
<polygon points="1202.4,670.4 1223.5,664.5 1230.3,688.3 1210.5,694.4" fill="none" stroke="#dba4aa" stroke-width="1.600"/>
<polygon points="1202.4,708.5 1215.2,703.4 1218.8,709.5 1237.3,702.5 1247.3,726.5 1223.5,735.4 1214.3,711.4 1204.3,715.5" fill="none" stroke="#dba4aa" stroke-width="1.600"/>
<polygon points="1228.4,755.4 1249.6,743.5 1257.2,768.4 1235.4,775.6" fill="none" stroke="#dba4aa" stroke-width="1.600"/>
<polygon points="1125,616.5 1145.7,610.2 1150.7,627.9 1130.6,634.2" fill="none" stroke="#dba4aa" stroke-width="1.600"/>
<polygon points="946.3,825.5 973.3,818.5 977.5,834.2 950.6,838.7" fill="none" stroke="#dba4aa" stroke-width="1.600"/>
<polygon points="967.1,837.4 981.6,835.1 983.7,842.5 969,845.9" fill="none" stroke="#dba4aa" stroke-width="1.600"/>
<polygon points="959.5,850.6 975.6,845.9 976.5,853.8 962.4,857.6" fill="none" stroke="#dba4aa" stroke-width="1.600"/>
<polygon points="968,857.2 990.3,850.6 996.8,868.6 974.3,875.6" fill="none" stroke="#dba4aa" stroke-width="1.600"/>
<polygon points="974.3,884.6 989.2,879.5 991.7,886.5 976.5,891.6" fill="none" stroke="#dba4aa" stroke-width="1.600"/>
<polygon points="981.3,889.4 1001.5,882.4 1007.7,899.4 987.5,906.4" fill="none" stroke="#dba4aa" stroke-width="1.600"/>
<polygon points="1025.3,817.6 1050.2,810.4 1056.5,831.4 1031.7,838.3" fill="none" stroke="#dba4aa" stroke-width="1.600"/>
<polygon points="1037.4,856.7 1055.3,850.6 1061.6,866.3 1042.7,873.7" fill="none" stroke="#dba4aa" stroke-width="1.600"/>
<polygon points="1117.3,830.4 1123.6,828.3 1125.8,838.3 1119.2,839.7" fill="none" stroke="#dba4aa" stroke-width="1.600"/>
<polygon points="1198.2,854.8 1220.3,843.6 1231.7,862.5 1208.4,874.6" fill="none" stroke="#dba4aa" stroke-width="1.600"/>
<polygon points="1180.3,858.6 1197.6,852.5 1206.5,868.6 1188.2,872" fill="none" stroke="#dba4aa" stroke-width="1.600"/>
<polygon points="1172.1,882.8 1189.1,873.3 1198.6,889.4 1180.6,899.4" fill="none" stroke="#dba4aa" stroke-width="1.600"/>
<polygon points="1162.3,882.4 1169.3,878.4 1173.4,885.6 1166.5,889.4" fill="none" stroke="#dba4aa" stroke-width="1.600"/>
<polygon points="1136.2,901.7 1153.2,892.6 1162.7,909.6 1146.6,918.7" fill="none" stroke="#dba4aa" stroke-width="1.600"/>
<polygon points="713.8,890.5 776.2,875 783.8,903 789.5,902.5 795.5,923.2 773.8,928.2 769.2,913.2 759.5,915 754.5,896.8 735.5,901.8 738.8,914.2 720.8,919.2" fill="none" stroke="#dba4aa" stroke-width="1.600"/>
<polygon points="825,855.5 845.8,850 849.5,862.3 828.6,868" fill="none" stroke="#dba4aa" stroke-width="1.600"/>
<polygon points="828.6,868 849.5,862.3 853.3,874.6 832.2,880.5" fill="none" stroke="#dba4aa" stroke-width="1.600"/>
<polygon points="832.2,880.5 853.3,874.6 857,886.9 835.9,893" fill="none" stroke="#dba4aa" stroke-width="1.600"/>
<polygon points="835.9,893 857,886.9 860.8,899.2 839.5,905.5" fill="none" stroke="#dba4aa" stroke-width="1.600"/>
<polygon points="842.5,842.5 865.5,836.8 867.5,845.5 845.5,849.2" fill="none" stroke="#dba4aa" stroke-width="1.600"/>
<polygon points="757.4,466.7 762.2,465.3 761.6,461.6 767.4,460.1 769,463.5 772.3,462.5 774.7,468.4 780.5,466.7 786,484 769.5,488.6 763,486" fill="none" stroke="#dba4aa" stroke-width="1.600"/>
<polygon points="819.5,483.4 836.3,478.6 841.5,495.3 825.5,500.6" fill="none" stroke="#dba4aa" stroke-width="1.600"/>
<polygon points="892.5,479.5 916,472.5 919.5,484 896,491" fill="none" stroke="#dba4aa" stroke-width="1.600"/>
<polyline points="658,63 663.3,175.4 665.3,226.3 669.1,318.3 672.3,354.2 675.3,371.8 677.8,385.7 680.3,399.5 684.5,420 697.1,455.3 707.2,490.6 720.3,548.5 725.3,568.7 748.7,651.8 772.4,736.5 797.5,829.5 809.5,877.5 822.5,926.8 829.5,942.5 843.8,965 847.5,972.5 862,998.3 871.3,1015" fill="none" stroke="#bdbdbd" stroke-width="2" />
<polyline points="445.1,790.3 558.5,680.2 594.3,645.5 631.6,611.5 646.7,599.4 661.3,591.3 676.4,584.5 702.1,575.5 725.3,568.7 776.5,557.3 782.8,554.8 854.6,530.9 862.1,528.3 927.4,506.5 997.3,481.4 1072.3,457.4 1147.6,434.2 1183.5,421.9 1313.3,379.4" fill="none" stroke="#bdbdbd" stroke-width="2" />
<polyline points="650.5,426.3 665.6,428.8 673.1,431.3 678.2,438.9 684.5,460.3" fill="none" stroke="#f4f060" stroke-width="1.8" />
<polyline points="700.1,522.8 707.2,548.5 704.1,556.1 698.3,563.6 675.7,572.4" fill="none" stroke="#f4f060" stroke-width="1.8" />
<polyline points="694.1,593.9 703.4,590.1 714.7,589.3 721,593.9 722.8,598.9" fill="none" stroke="#f4f060" stroke-width="1.8" />
<polyline points="724.3,604.7 729.8,625.4 731.6,629.1 746.2,679.5" fill="none" stroke="#f4f060" stroke-width="1.8" />
<polyline points="762.6,661.4 764.6,670.7" fill="none" stroke="#f4f060" stroke-width="1.8" />
<polyline points="739.7,660 744.4,678.3" fill="none" stroke="#f4f060" stroke-width="1.8" />
<polyline points="762.4,661.5 764.3,670.4" fill="none" stroke="#f4f060" stroke-width="1.8" />
<polyline points="769,688.3 774.6,704.4" fill="none" stroke="#f4f060" stroke-width="1.8" />
<polyline points="771.2,694.6 799.2,687.8" fill="none" stroke="#f4f060" stroke-width="1.8" />
<polyline points="969.3,620.8 979.4,619.1 1027.2,596.4 1103.6,570.4 1128,561.6 1138.1,561.6 1148.2,563.6 1157,573.2 1164.1,597.6 1184.7,680" fill="none" stroke="#bdbdbd" stroke-width="2" />
<polyline points="927.4,506.6 953.5,606.1" fill="none" stroke="#10c010" stroke-width="1.3" />
<polyline points="938.362,548.39 941.755,561.325" fill="none" stroke="#9010c0" stroke-width="1.3" />
<polyline points="928.183,509.585 930.01,516.55" fill="none" stroke="#9010c0" stroke-width="1.3" />
<polyline points="997.3,481.4 1026.6,595.7" fill="none" stroke="#10c010" stroke-width="1.3" />
<polyline points="1009.61,529.406 1013.41,544.265" fill="none" stroke="#9010c0" stroke-width="1.3" />
<polyline points="998.179,484.829 1000.23,492.83" fill="none" stroke="#9010c0" stroke-width="1.3" />
<polyline points="1072.3,457.4 1103.1,570.2" fill="none" stroke="#10c010" stroke-width="1.3" />
<polyline points="1085.24,504.776 1089.24,519.44" fill="none" stroke="#9010c0" stroke-width="1.3" />
<polyline points="1073.22,460.784 1075.38,468.68" fill="none" stroke="#9010c0" stroke-width="1.3" />
<polyline points="1147.6,434.2 1174,539.1" fill="none" stroke="#10c010" stroke-width="1.3" />
<polyline points="1158.69,478.258 1162.12,491.895" fill="none" stroke="#9010c0" stroke-width="1.3" />
<polyline points="1148.39,437.347 1150.24,444.69" fill="none" stroke="#9010c0" stroke-width="1.3" />
<polyline points="953.5,606.1 969.3,620.8" fill="none" stroke="#10c010" stroke-width="1.3" />
<polyline points="1246.8,505 1250.6,517.3 1174,539.4 1153.2,546.2 1148.5,563.6" fill="none" stroke="#7a96b8" stroke-width="1.2" />
<polyline points="1073.5,588.6 1125.8,571.2 1131.5,570.2 1138.1,571.2 1144.7,575 1148.5,578.4 1151.3,584.4 1157,600.5" fill="none" stroke="#f4f060" stroke-width="1.8" />
<polyline points="1064.4,776.6 1062.5,788.3 1059.3,794.5 1051.2,801.5 1041.4,806.2 1020.9,813.4 1014.3,816.6 1002.6,820.4" fill="none" stroke="#7a96b8" stroke-width="1.2" />
<polyline points="969.3,620.8 974.3,675.5 978.4,729.3 990.3,774.7 1017.5,873.7 1036.1,933.4 1055.3,994.3" fill="none" stroke="#bdbdbd" stroke-width="2" />
<polyline points="1184.7,680 1181.6,667.5 1206.1,762.4 1216.5,788.5 1227.5,815.7 1241.1,843.6 1255.3,871.4 1258.5,886.5" fill="none" stroke="#bdbdbd" stroke-width="2" />
<polyline points="901.2,861.2 906.2,875 912.5,901.2 923,939.2 890,954.2 875,960.8 857.5,968" fill="none" stroke="#10d030" stroke-width="1.3" stroke-dasharray="8 11"/>
<polyline points="708.3,467.9 839.1,450.1 849.5,494.6 860.5,498.3" fill="none" stroke="#18902a" stroke-width="1.8" />
<polyline points="770.7,548.5 753.3,553 740.4,554 734.4,551.8 723.5,525.8 717.2,495.6 711,474 708.3,467.9" fill="none" stroke="#18902a" stroke-width="1.8" />
<polyline points="758.8,486.8 767.1,496.9 773.2,520.3 771.4,527.8 772.2,537.9 770.7,548.5" fill="none" stroke="#10c828" stroke-width="1.3" />
<polyline points="864.2,517.1 845.8,520.8 816,531.8 782.8,543.5" fill="none" stroke="#f4f060" stroke-width="1.8" />
<polyline points="706.2,454.3 729.2,445.9 747,441.7 774.2,428.7" fill="none" stroke="#10e020" stroke-width="1.2" stroke-dasharray="7 6"/>
<polyline points="774.7,428.4 791.4,423.7 800.3,420 806,412.7" fill="none" stroke="#10e020" stroke-width="1.2" />
<polyline points="861,484 868.8,463.8 877.6,426 887.7,385.7 912.9,371.8" fill="none" stroke="#7a5a22" stroke-width="2" stroke-dasharray="5 5"/>
<polyline points="912.9,371.8 956.4,361 1077.3,328.3 1150,306.4 1256.2,272.8 1277.5,267.3" fill="none" stroke="#6a5020" stroke-width="2" stroke-dasharray="3 6"/>
<polyline points="569,400.8 837.2,438 1640,201.5" fill="none" stroke="#ffffff" stroke-width="2" />
<polyline points="813.4,343.4 731.4,365.6 700.5,373.4 690.4,385.5" fill="none" stroke="#c0e8b4" stroke-width="1.6" />
<polyline points="827.2,404.6 812.6,406.3 808.3,415.9 800.8,420.9 792,424 778.1,429 832.5,428.4 827.2,404.6" fill="none" stroke="#c0e8b4" stroke-width="1.6" />
<polyline points="778.1,429 781.9,441.1 786,456.5" fill="none" stroke="#c0e8b4" stroke-width="1.6" />
<polyline points="690.4,385.5 687.3,390.7 702.5,447.4 706.3,461.3" fill="none" stroke="#f4f060" stroke-width="1.8" />
<polyline points="817.3,358.5 837.3,438.6" fill="none" stroke="#f4f060" stroke-width="1.8" />
<polyline points="690.4,386.5 733.3,384.4 769.4,387.4 796.3,383.6 801.3,415.3 705,447.4" fill="none" stroke="#f4f060" stroke-width="1.8" />
<text x="973" y="339.500" font-size="18" fill="rgba(226,226,226,.8)" stroke="rgba(226,226,226,.5)" stroke-width=".4">Schafsweide, Bioland-Obstbau Manfred Gebhardt</text>
<polygon points="1054.6,771.5 1069.5,766.2 1084.6,761.1 1092.8,787.3 1078.2,791.7 1063.5,796.4" fill="rgba(230,215,200,.16)"/>
<polygon points="1069.5,766.2 1084.6,761.1 1092.8,787.3 1078.2,791.7" fill="rgba(230,200,200,.2)" stroke="#dba4aa" stroke-width="1.300"/>
<polygon points="1054.6,771.5 1069.5,766.2 1084.6,761.1 1092.8,787.3 1078.2,791.7 1063.5,796.4" fill="none" stroke="#eadbc2" stroke-width="1.800"/>
<circle cx="932.5" cy="844" r="4" fill="#00006a"/>
<polygon points="778.4,527 788.9,523.9 791,530.2 780.5,533.5" fill="rgba(200,220,200,.15)" stroke="#f2f2e4" stroke-width="1.800"/>
<polygon points="713,497 716.500,496 721,511 717.500,512" fill="#88a8d8"/><polygon points="714,491 717,490.300 718.200,494 715.200,494.800" fill="#88a8d8"/>
<path d="M709.500 490.500h12M711.500 490.500v5M719.500 490.500v5" stroke="#f0f0f0" stroke-width="1.300" fill="none"/>
<path d="M774 542.500h12M776 542.500v5M784 542.500v5" stroke="#f0f0f0" stroke-width="1.300" fill="none"/>
<rect x="700.500" y="459.500" width="9" height="7" fill="none" stroke="#c05050" stroke-width=".8" stroke-dasharray="2 1.500"/>
<path d="M735.500 431.500l8.500 9" stroke="#c07818" stroke-width="2.600"/><path d="M738.500 435.500l5 5" stroke="#2020d0" stroke-width="1.300"/>
<path d="M648 484l5-3" stroke="#1010e0" stroke-width="2.500"/><circle cx="647.200" cy="483.500" r="2" fill="#f0e000"/>
<polygon points="1462.4,151.4 1358.3,197.3 1321.3,215.6 1168.4,254.3 986.1,300.6 813.5,343.4 817.3,358.5 825.4,359.8 830.4,355.2 840.5,348.4 854.3,349.2 883.3,352.7 1025.2,309.6 1071.5,310.6 1143.3,286.4 1197.5,277.2 1303.2,241.4 1353.6,220.5 1455.4,171.6 1472.5,207.4 1467.5,213.4 1439.3,227.3 1405.2,252.7 1353.6,273.6 1308.2,285.5 1282.5,284.5 1204.4,317.4 1162.5,317.4 1086.1,342.1 1084.4,356.7 1073.5,360.5 1055.4,367.3 1047.6,368.8 1040.8,370.1 982.3,386.5 928.7,381.4 915.6,384.2 908.5,394.5 916.3,401.6 931.2,402.6 933.7,416.5 911.3,431.3 945.3,439.4 1074.3,394.5 1107.1,365.8 1143.3,344.6 1178.1,334.3 1223.5,335.3 1256.2,331.5 1240.5,370.4 926.8,476.2 919.8,487.2 895.3,494.5 860.5,498.5 863.3,516.2 1086.5,441.4 1311.3,367.4 1439.3,328.5 1528.2,279.7 1488.4,213.1 1485.6,203.6 1484.4,193.5" fill="none" stroke="#ff0000" stroke-width="2"/>
<path d="M1358.3 197.3L1368.3 197.0M1358.3 197.3L1365.3 190.1M1321.3 215.6L1331.3 214.8M1321.3 215.6L1328.0 208.1M1168.4 254.3L1178.3 255.7M1168.4 254.3L1176.5 248.4M986.1 300.6L996.0 301.9M986.1 300.6L994.2 294.7M813.5 343.4L823.4 344.8M813.5 343.4L821.6 337.5M817.3 358.5L818.7 348.6M817.3 358.5L811.4 350.4M825.4 359.8L816.8 354.6M825.4 359.8L815.7 362.0M830.4 355.2L821.0 358.7M830.4 355.2L826.1 364.2M840.5 348.4L830.7 350.5M840.5 348.4L834.9 356.7M854.3 349.2L845.3 344.9M854.3 349.2L844.8 352.4M883.3 352.7L874.5 347.9M883.3 352.7L873.6 355.3M1025.2 309.6L1015.2 308.7M1025.2 309.6L1017.4 315.9M1071.5 310.6L1062.3 306.7M1071.5 310.6L1062.1 314.1M1143.3 286.4L1133.3 285.8M1143.3 286.4L1135.7 292.9M1197.5 277.2L1187.7 275.1M1197.5 277.2L1189.0 282.4M1303.2 241.4L1293.2 240.8M1303.2 241.4L1295.6 247.9M1353.6 220.5L1343.6 220.6M1353.6 220.5L1346.5 227.5M1455.4 171.6L1445.4 172.2M1455.4 171.6L1448.7 179.0M1472.5 207.4L1471.9 197.4M1472.5 207.4L1465.1 200.6M1467.5 213.4L1476.3 208.7M1467.5 213.4L1470.6 203.9M1439.3 227.3L1449.3 226.6M1439.3 227.3L1446.0 219.8M1405.2 252.7L1414.9 250.2M1405.2 252.7L1410.4 244.2M1353.6 273.6L1363.6 273.6M1353.6 273.6L1360.8 266.6M1308.2 285.5L1318.1 286.8M1308.2 285.5L1316.2 279.5M1282.5 284.5L1291.6 288.6M1282.5 284.5L1291.9 281.1M1204.4 317.4L1214.4 317.3M1204.4 317.4L1211.5 310.3M1162.5 317.4L1171.8 321.1M1162.5 317.4L1171.8 313.7M1086.1 342.1L1096.1 342.8M1086.1 342.1L1093.8 335.7M1084.4 356.7L1089.2 347.9M1084.4 356.7L1081.8 347.1M1073.5 360.5L1083.5 361.0M1073.5 360.5L1081.0 353.9M1055.4 367.3L1065.4 367.5M1055.4 367.3L1062.8 360.5M1047.6 368.8L1057.4 370.7M1047.6 368.8L1056.0 363.4M1040.8 370.1L1050.6 372.0M1040.8 370.1L1049.2 364.7M982.3 386.5L992.2 387.6M982.3 386.5L990.2 380.4M928.7 381.4L937.6 386.0M928.7 381.4L938.3 378.5M915.6 384.2L925.5 385.9M915.6 384.2L923.9 378.6M908.5 394.5L916.8 389.0M908.5 394.5L910.7 384.7M916.3 401.6L912.0 392.6M916.3 401.6L906.9 398.1M931.2 402.6L922.2 398.2M931.2 402.6L921.7 405.7M933.7 416.5L935.7 406.7M933.7 416.5L928.4 408.0M911.3 431.3L921.1 429.3M911.3 431.3L917.0 423.1M945.3 439.4L937.1 433.6M945.3 439.4L935.4 440.9M1074.3 394.5L1064.3 394.0M1074.3 394.5L1066.8 401.1M1107.1 365.8L1097.7 369.1M1107.1 365.8L1102.6 374.7M1143.3 344.6L1133.4 346.1M1143.3 344.6L1137.2 352.5M1178.1 334.3L1168.1 333.3M1178.1 334.3L1170.3 340.5M1223.5 335.3L1214.3 331.4M1223.5 335.3L1214.1 338.8M1256.2 331.5L1246.6 328.8M1256.2 331.5L1247.4 336.3M1240.5 370.4L1247.4 363.2M1240.5 370.4L1240.5 360.4M926.8 476.2L936.8 476.8M926.8 476.2L934.4 469.7M919.8 487.2L927.9 481.4M919.8 487.2L921.6 477.4M895.3 494.5L905.3 495.4M895.3 494.5L903.1 488.3M860.5 498.5L870.1 501.2M860.5 498.5L869.3 493.7M863.3 516.2L865.6 506.5M863.3 516.2L858.2 507.6M1086.5 441.4L1076.5 440.8M1086.5 441.4L1078.9 447.9M1311.3 367.4L1301.3 366.7M1311.3 367.4L1303.7 373.9M1439.3 328.5L1429.3 327.6M1439.3 328.5L1431.5 334.8M1528.2 279.7L1518.3 280.9M1528.2 279.7L1521.9 287.4M1488.4 213.1L1489.9 223.0M1488.4 213.1L1496.4 219.1M1485.6 203.6L1484.6 213.6M1485.6 203.6L1491.8 211.4M1484.4 193.5L1481.8 203.1M1484.4 193.5L1489.2 202.3M1462.4 151.4L1463.4 161.4M1462.4 151.4L1470.0 157.9" fill="none" stroke="#ff0000" stroke-width="2"/>
<path d="M575 437h2v2h-2zM572 447h2v2h-2zM662 174h2v2h-2zM664 225h2v2h-2zM668 317h2v2h-2zM671 353h2v2h-2zM674 371h2v2h-2zM677 385h2v2h-2zM679 399h2v2h-2zM444 789h2v2h-2zM557 679h2v2h-2zM649 425h2v2h-2zM665 428h2v2h-2zM672 430h2v2h-2zM677 438h2v2h-2zM683 459h2v2h-2zM699 522h2v2h-2zM706 547h2v2h-2zM703 555h2v2h-2zM697 563h2v2h-2zM675 571h2v2h-2zM693 593h2v2h-2zM702 589h2v2h-2zM714 588h2v2h-2zM720 593h2v2h-2zM722 598h2v2h-2zM723 604h2v2h-2zM729 624h2v2h-2zM731 628h2v2h-2zM762 660h2v2h-2zM764 670h2v2h-2zM631 611h2v2h-2zM646 598h2v2h-2zM660 590h2v2h-2zM675 583h2v2h-2zM701 575h2v2h-2zM743 677h2v2h-2zM761 661h2v2h-2zM763 669h2v2h-2zM768 687h2v2h-2zM774 703h2v2h-2zM798 687h2v2h-2zM771 735h2v2h-2zM796 829h2v2h-2zM1164 443h2v2h-2zM1312 378h2v2h-2zM1127 561h2v2h-2zM1137 561h2v2h-2zM1156 572h2v2h-2zM1250 516h2v2h-2zM1152 545h2v2h-2zM1073 588h2v2h-2zM1125 570h2v2h-2zM1131 569h2v2h-2zM1137 570h2v2h-2zM1144 574h2v2h-2zM1147 577h2v2h-2zM1150 583h2v2h-2zM1156 599h2v2h-2zM1231 749h2v2h-2zM1233 753h2v2h-2zM1063 776h2v2h-2zM1058 793h2v2h-2zM1050 801h2v2h-2zM1040 805h2v2h-2zM1013 816h2v2h-2zM977 728h2v2h-2zM1017 873h2v2h-2zM1054 993h2v2h-2zM1205 761h2v2h-2zM1227 815h2v2h-2zM1254 870h2v2h-2zM1257 885h2v2h-2zM900 848h2v2h-2zM907 847h2v2h-2zM902 853h2v2h-2zM909 851h2v2h-2zM908 859h2v2h-2zM913 857h2v2h-2zM916 863h2v2h-2zM911 864h2v2h-2zM917 844h2v2h-2zM922 843h2v2h-2zM919 849h2v2h-2zM925 847h2v2h-2zM927 841h2v2h-2zM930 837h2v2h-2zM934 838h2v2h-2zM935 844h2v2h-2zM933 847h2v2h-2zM929 847h2v2h-2zM927 844h2v2h-2zM900 881h2v2h-2zM904 880h2v2h-2zM903 885h2v2h-2zM900 885h2v2h-2zM922 938h2v2h-2zM797 829h2v2h-2zM821 926h2v2h-2zM829 941h2v2h-2zM861 997h2v2h-2zM922 938h2v2h-2zM889 953h2v2h-2zM766 496h2v2h-2zM772 519h2v2h-2zM770 527h2v2h-2zM771 537h2v2h-2zM752 552h2v2h-2zM739 553h2v2h-2zM733 551h2v2h-2zM723 525h2v2h-2zM716 495h2v2h-2zM777 526h2v2h-2zM788 523h2v2h-2zM790 529h2v2h-2zM779 533h2v2h-2zM774 427h2v2h-2zM779 427h2v2h-2zM790 423h2v2h-2zM793 423h2v2h-2zM799 419h2v2h-2zM805 412h2v2h-2zM809 415h2v2h-2zM811 406h2v2h-2zM825 403h2v2h-2zM831 427h2v2h-2zM730 365h2v2h-2zM699 372h2v2h-2zM732 383h2v2h-2zM768 386h2v2h-2zM795 383h2v2h-2zM887 385h2v2h-2zM877 425h2v2h-2zM868 463h2v2h-2zM899 375h2v2h-2zM912 371h2v2h-2zM929 365h2v2h-2zM1074 327h2v2h-2zM1199 293h2v2h-2zM1257 271h2v2h-2zM1277 266h2v2h-2zM1170 349h2v2h-2zM865 473h2v2h-2zM873 436h2v2h-2zM691 470h2v2h-2zM695 485h2v2h-2zM707 481h2v2h-2zM717 515h2v2h-2zM751 437h2v2h-2zM752 436h2v2h-2zM735 431h2v2h-2zM733 437h2v2h-2zM745 438h2v2h-2zM747 441h2v2h-2zM651 478h2v2h-2zM656 474h2v2h-2zM658 474h2v2h-2zM658 479h2v2h-2zM655 481h2v2h-2zM653 477h2v2h-2zM824 359h2v2h-2zM829 354h2v2h-2zM839 347h2v2h-2zM853 348h2v2h-2zM882 352h2v2h-2zM1024 309h2v2h-2zM1071 310h2v2h-2zM1142 285h2v2h-2zM1197 276h2v2h-2zM1302 240h2v2h-2zM1353 219h2v2h-2zM1454 171h2v2h-2zM1471 206h2v2h-2zM1467 212h2v2h-2zM1438 226h2v2h-2zM1404 252h2v2h-2zM1353 273h2v2h-2zM1307 285h2v2h-2zM1281 283h2v2h-2zM1203 316h2v2h-2zM1161 316h2v2h-2zM1085 341h2v2h-2zM1083 356h2v2h-2zM1073 359h2v2h-2zM1054 366h2v2h-2zM1047 368h2v2h-2zM1040 369h2v2h-2zM981 385h2v2h-2zM928 380h2v2h-2zM915 383h2v2h-2zM907 393h2v2h-2zM915 401h2v2h-2zM930 402h2v2h-2zM933 415h2v2h-2zM910 430h2v2h-2zM944 438h2v2h-2zM1073 393h2v2h-2zM1106 365h2v2h-2zM1142 344h2v2h-2zM1177 333h2v2h-2zM1223 334h2v2h-2zM1255 331h2v2h-2zM1239 369h2v2h-2zM926 475h2v2h-2zM569 438h2v2h-2zM595 432h2v2h-2zM603 464h2v2h-2zM577 470h2v2h-2zM637 446h2v2h-2zM666 439h2v2h-2zM668 446h2v2h-2zM673 444h2v2h-2zM677 456h2v2h-2zM671 458h2v2h-2zM673 463h2v2h-2zM651 468h2v2h-2zM647 458h2v2h-2zM641 459h2v2h-2zM633 494h2v2h-2zM647 488h2v2h-2zM655 513h2v2h-2zM640 518h2v2h-2zM663 507h2v2h-2zM685 500h2v2h-2zM695 539h2v2h-2zM673 545h2v2h-2zM593 568h2v2h-2zM639 556h2v2h-2zM643 572h2v2h-2zM598 585h2v2h-2zM655 564h2v2h-2zM663 562h2v2h-2zM665 568h2v2h-2zM657 571h2v2h-2zM688 619h2v2h-2zM707 613h2v2h-2zM711 626h2v2h-2zM692 633h2v2h-2zM701 629h2v2h-2zM718 625h2v2h-2zM728 653h2v2h-2zM708 660h2v2h-2zM654 626h2v2h-2zM676 622h2v2h-2zM682 645h2v2h-2zM658 649h2v2h-2zM633 639h2v2h-2zM654 634h2v2h-2zM659 660h2v2h-2zM638 663h2v2h-2zM767 616h2v2h-2zM788 611h2v2h-2zM797 639h2v2h-2zM776 645h2v2h-2zM759 578h2v2h-2zM777 573h2v2h-2zM783 595h2v2h-2zM764 600h2v2h-2zM838 552h2v2h-2zM851 549h2v2h-2zM857 565h2v2h-2zM842 568h2v2h-2zM857 550h2v2h-2zM880 544h2v2h-2zM884 558h2v2h-2zM861 565h2v2h-2zM836 573h2v2h-2zM854 568h2v2h-2zM857 583h2v2h-2zM863 581h2v2h-2zM869 611h2v2h-2zM857 613h2v2h-2zM855 607h2v2h-2zM842 612h2v2h-2zM840 604h2v2h-2zM837 605h2v2h-2zM832 588h2v2h-2zM840 585h2v2h-2zM614 665h2v2h-2zM633 661h2v2h-2zM638 690h2v2h-2zM618 693h2v2h-2zM596 681h2v2h-2zM608 677h2v2h-2zM610 689h2v2h-2zM597 693h2v2h-2zM621 705h2v2h-2zM639 703h2v2h-2zM642 719h2v2h-2zM624 720h2v2h-2zM605 744h2v2h-2zM623 742h2v2h-2zM626 763h2v2h-2zM608 766h2v2h-2zM579 732h2v2h-2zM589 730h2v2h-2zM591 748h2v2h-2zM597 757h2v2h-2zM581 764h2v2h-2zM576 752h2v2h-2zM581 750h2v2h-2zM676 699h2v2h-2zM681 698h2v2h-2zM682 703h2v2h-2zM677 705h2v2h-2zM705 816h2v2h-2zM711 814h2v2h-2zM713 820h2v2h-2zM706 821h2v2h-2zM724 695h2v2h-2zM736 691h2v2h-2zM739 704h2v2h-2zM714 711h2v2h-2zM740 705h2v2h-2zM743 723h2v2h-2zM743 723h2v2h-2zM745 737h2v2h-2zM723 743h2v2h-2zM736 759h2v2h-2zM755 754h2v2h-2zM766 789h2v2h-2zM745 794h2v2h-2zM726 803h2v2h-2zM740 799h2v2h-2zM745 815h2v2h-2zM731 820h2v2h-2zM746 814h2v2h-2zM765 809h2v2h-2zM771 831h2v2h-2zM753 836h2v2h-2zM776 656h2v2h-2zM794 650h2v2h-2zM783 676h2v2h-2zM802 678h2v2h-2zM787 683h2v2h-2zM787 695h2v2h-2zM806 690h2v2h-2zM811 710h2v2h-2zM793 715h2v2h-2zM794 735h2v2h-2zM812 729h2v2h-2zM817 752h2v2h-2zM801 756h2v2h-2zM805 773h2v2h-2zM822 769h2v2h-2zM830 795h2v2h-2zM814 800h2v2h-2zM815 813h2v2h-2zM839 806h2v2h-2zM842 816h2v2h-2zM845 816h2v2h-2zM846 823h2v2h-2zM841 826h2v2h-2zM845 836h2v2h-2zM822 840h2v2h-2zM859 742h2v2h-2zM866 740h2v2h-2zM869 747h2v2h-2zM861 750h2v2h-2zM871 759h2v2h-2zM875 759h2v2h-2zM877 764h2v2h-2zM872 764h2v2h-2zM895 545h2v2h-2zM919 538h2v2h-2zM922 551h2v2h-2zM922 551h2v2h-2zM901 570h2v2h-2zM901 570h2v2h-2zM928 576h2v2h-2zM928 576h2v2h-2zM907 595h2v2h-2zM907 595h2v2h-2zM935 601h2v2h-2zM935 601h2v2h-2zM914 621h2v2h-2zM914 621h2v2h-2zM941 626h2v2h-2zM941 626h2v2h-2zM920 646h2v2h-2zM920 646h2v2h-2zM947 651h2v2h-2zM923 658h2v2h-2zM971 508h2v2h-2zM992 503h2v2h-2zM995 517h2v2h-2zM995 517h2v2h-2zM977 535h2v2h-2zM977 535h2v2h-2zM1001 543h2v2h-2zM1001 543h2v2h-2zM983 563h2v2h-2zM983 563h2v2h-2zM1007 570h2v2h-2zM1007 570h2v2h-2zM1011 583h2v2h-2zM989 590h2v2h-2zM1046 483h2v2h-2zM1067 477h2v2h-2zM1070 490h2v2h-2zM1070 490h2v2h-2zM1053 509h2v2h-2zM1053 509h2v2h-2zM1077 517h2v2h-2zM1077 517h2v2h-2zM1060 536h2v2h-2zM1060 536h2v2h-2zM1083 544h2v2h-2zM1083 544h2v2h-2zM1087 557h2v2h-2zM1066 563h2v2h-2zM1121 459h2v2h-2zM1141 454h2v2h-2zM1145 467h2v2h-2zM1145 467h2v2h-2zM1128 486h2v2h-2zM1128 486h2v2h-2zM1152 493h2v2h-2zM1152 493h2v2h-2zM1135 513h2v2h-2zM1135 513h2v2h-2zM1159 520h2v2h-2zM1159 520h2v2h-2zM1162 533h2v2h-2zM1142 539h2v2h-2zM1195 434h2v2h-2zM1217 428h2v2h-2zM1219 442h2v2h-2zM1219 442h2v2h-2zM1201 461h2v2h-2zM1201 461h2v2h-2zM1225 469h2v2h-2zM1225 469h2v2h-2zM1207 487h2v2h-2zM1207 487h2v2h-2zM1231 496h2v2h-2zM1231 496h2v2h-2zM1234 510h2v2h-2zM1214 514h2v2h-2zM1152 449h2v2h-2zM1181 437h2v2h-2zM1186 451h2v2h-2zM1157 460h2v2h-2zM1002 495h2v2h-2zM1014 491h2v2h-2zM1019 504h2v2h-2zM1005 508h2v2h-2zM1014 535h2v2h-2zM1020 534h2v2h-2zM1021 539h2v2h-2zM1015 541h2v2h-2zM1021 565h2v2h-2zM1029 561h2v2h-2zM1033 571h2v2h-2zM1024 575h2v2h-2zM1095 537h2v2h-2zM1107 532h2v2h-2zM1112 547h2v2h-2zM1099 550h2v2h-2zM1237 439h2v2h-2zM1243 437h2v2h-2zM1246 446h2v2h-2zM1240 448h2v2h-2zM1167 552h2v2h-2zM1187 545h2v2h-2zM1191 557h2v2h-2zM1197 555h2v2h-2zM1202 567h2v2h-2zM1175 576h2v2h-2zM1230 547h2v2h-2zM1244 543h2v2h-2zM1244 538h2v2h-2zM1253 537h2v2h-2zM1260 534h2v2h-2zM1265 554h2v2h-2zM1257 555h2v2h-2zM1259 563h2v2h-2zM1235 568h2v2h-2zM1110 586h2v2h-2zM1131 580h2v2h-2zM1136 599h2v2h-2zM1115 605h2v2h-2zM1141 595h2v2h-2zM1150 591h2v2h-2zM1154 600h2v2h-2zM1144 603h2v2h-2zM1179 593h2v2h-2zM1200 587h2v2h-2zM1203 599h2v2h-2zM1207 598h2v2h-2zM1210 609h2v2h-2zM1187 617h2v2h-2zM1018 617h2v2h-2zM1042 609h2v2h-2zM1077 597h2v2h-2zM1082 615h2v2h-2zM1067 621h2v2h-2zM1066 615h2v2h-2zM1046 621h2v2h-2zM1048 627h2v2h-2zM1024 634h2v2h-2zM899 663h2v2h-2zM914 659h2v2h-2zM919 675h2v2h-2zM901 681h2v2h-2zM921 675h2v2h-2zM941 671h2v2h-2zM945 691h2v2h-2zM925 697h2v2h-2zM926 713h2v2h-2zM946 707h2v2h-2zM953 728h2v2h-2zM933 734h2v2h-2zM928 753h2v2h-2zM960 744h2v2h-2zM967 765h2v2h-2zM948 771h2v2h-2zM944 763h2v2h-2zM933 766h2v2h-2zM948 780h2v2h-2zM967 775h2v2h-2zM975 801h2v2h-2zM954 805h2v2h-2zM989 641h2v2h-2zM1014 632h2v2h-2zM993 653h2v2h-2zM1025 634h2v2h-2zM1027 642h2v2h-2zM997 657h2v2h-2zM1025 649h2v2h-2zM1031 669h2v2h-2zM1004 679h2v2h-2zM992 701h2v2h-2zM999 723h2v2h-2zM1025 692h2v2h-2zM1031 712h2v2h-2zM1005 738h2v2h-2zM1027 733h2v2h-2zM1034 751h2v2h-2zM1011 758h2v2h-2zM1011 777h2v2h-2zM1037 771h2v2h-2zM1045 793h2v2h-2zM1018 801h2v2h-2zM1135 654h2v2h-2zM1155 647h2v2h-2zM1161 665h2v2h-2zM1141 672h2v2h-2zM1133 690h2v2h-2zM1152 683h2v2h-2zM1165 686h2v2h-2zM1172 707h2v2h-2zM1163 712h2v2h-2zM1165 719h2v2h-2zM1153 723h2v2h-2zM1135 697h2v2h-2zM1148 735h2v2h-2zM1166 731h2v2h-2zM1169 737h2v2h-2zM1177 735h2v2h-2zM1183 751h2v2h-2zM1155 759h2v2h-2zM1161 777h2v2h-2zM1186 769h2v2h-2zM1192 787h2v2h-2zM1167 795h2v2h-2zM1146 791h2v2h-2zM1152 785h2v2h-2zM1162 782h2v2h-2zM1166 795h2v2h-2zM1148 801h2v2h-2zM1193 629h2v2h-2zM1215 623h2v2h-2zM1222 647h2v2h-2zM1200 654h2v2h-2zM1201 669h2v2h-2zM1223 663h2v2h-2zM1229 687h2v2h-2zM1209 693h2v2h-2zM1201 707h2v2h-2zM1214 702h2v2h-2zM1236 701h2v2h-2zM1246 725h2v2h-2zM1223 734h2v2h-2zM1203 715h2v2h-2zM1227 754h2v2h-2zM1249 743h2v2h-2zM1256 767h2v2h-2zM1234 775h2v2h-2zM1124 615h2v2h-2zM1145 609h2v2h-2zM1150 627h2v2h-2zM1130 633h2v2h-2zM945 825h2v2h-2zM972 817h2v2h-2zM977 833h2v2h-2zM950 838h2v2h-2zM966 836h2v2h-2zM981 834h2v2h-2zM983 841h2v2h-2zM959 850h2v2h-2zM975 845h2v2h-2zM975 853h2v2h-2zM961 857h2v2h-2zM967 856h2v2h-2zM989 850h2v2h-2zM996 868h2v2h-2zM973 875h2v2h-2zM973 884h2v2h-2zM988 879h2v2h-2zM975 891h2v2h-2zM1001 881h2v2h-2zM1007 898h2v2h-2zM987 905h2v2h-2zM1024 817h2v2h-2zM1049 809h2v2h-2zM1055 830h2v2h-2zM1031 837h2v2h-2zM1036 856h2v2h-2zM1054 850h2v2h-2zM1061 865h2v2h-2zM1042 873h2v2h-2zM1116 829h2v2h-2zM1123 827h2v2h-2zM1125 837h2v2h-2zM1118 839h2v2h-2zM1219 843h2v2h-2zM1231 861h2v2h-2zM1207 874h2v2h-2zM1179 858h2v2h-2zM1197 851h2v2h-2zM1187 871h2v2h-2zM1171 882h2v2h-2zM1188 872h2v2h-2zM1198 888h2v2h-2zM1180 898h2v2h-2zM1161 881h2v2h-2zM1168 877h2v2h-2zM1165 888h2v2h-2zM1135 901h2v2h-2zM1152 892h2v2h-2zM1162 909h2v2h-2zM1146 918h2v2h-2zM713 889h2v2h-2zM775 874h2v2h-2zM783 902h2v2h-2zM789 901h2v2h-2zM795 922h2v2h-2zM773 927h2v2h-2zM768 912h2v2h-2zM759 914h2v2h-2zM753 896h2v2h-2zM735 901h2v2h-2zM738 913h2v2h-2zM720 918h2v2h-2zM824 855h2v2h-2zM845 849h2v2h-2zM849 861h2v2h-2zM849 861h2v2h-2zM831 879h2v2h-2zM831 879h2v2h-2zM856 886h2v2h-2zM856 886h2v2h-2zM860 898h2v2h-2zM839 905h2v2h-2zM841 841h2v2h-2zM865 836h2v2h-2zM867 845h2v2h-2zM845 848h2v2h-2zM756 466h2v2h-2zM761 464h2v2h-2zM761 461h2v2h-2zM766 459h2v2h-2zM768 463h2v2h-2zM771 461h2v2h-2zM774 467h2v2h-2zM779 466h2v2h-2zM785 483h2v2h-2zM769 488h2v2h-2zM762 485h2v2h-2zM819 482h2v2h-2zM835 478h2v2h-2zM841 494h2v2h-2zM825 500h2v2h-2zM891 479h2v2h-2zM915 471h2v2h-2zM919 483h2v2h-2zM895 490h2v2h-2z" fill="none" stroke="#ffff00" stroke-width="1" shape-rendering="crispEdges"/>
<path d="M723 567h4v4h-4zM718 546h4v4h-4zM774 555h4v4h-4zM781 553h4v4h-4zM853 529h4v4h-4zM769 693h4v4h-4zM736 704h4v4h-4zM726 708h4v4h-4zM718 728h4v4h-4zM740 723h4v4h-4zM826 786h4v4h-4zM810 791h4v4h-4zM799 671h4v4h-4zM784 675h4v4h-4zM897 557h4v4h-4zM924 562h4v4h-4zM903 582h4v4h-4zM930 587h4v4h-4zM910 607h4v4h-4zM937 612h4v4h-4zM916 632h4v4h-4zM943 638h4v4h-4zM973 521h4v4h-4zM997 529h4v4h-4zM979 548h4v4h-4zM1003 556h4v4h-4zM985 575h4v4h-4zM1049 495h4v4h-4zM1073 503h4v4h-4zM1055 522h4v4h-4zM1079 530h4v4h-4zM1062 548h4v4h-4zM1123 472h4v4h-4zM1147 479h4v4h-4zM1130 498h4v4h-4zM1154 506h4v4h-4zM1137 525h4v4h-4zM1197 446h4v4h-4zM1221 454h4v4h-4zM1203 473h4v4h-4zM1227 482h4v4h-4zM1210 500h4v4h-4zM925 505h4v4h-4zM995 479h4v4h-4zM1070 455h4v4h-4zM1146 432h4v4h-4zM1025 594h4v4h-4zM1102 568h4v4h-4zM1146 562h4v4h-4zM1172 537h4v4h-4zM1015 694h4v4h-4zM1021 714h4v4h-4zM949 786h4v4h-4zM970 781h4v4h-4zM1016 636h4v4h-4zM1019 644h4v4h-4zM1141 692h4v4h-4zM1153 688h4v4h-4zM1212 709h4v4h-4zM1217 708h4v4h-4zM1152 787h4v4h-4zM1155 797h4v4h-4zM1053 770h4v4h-4zM1068 764h4v4h-4zM1083 759h4v4h-4zM1091 785h4v4h-4zM1076 790h4v4h-4zM1062 794h4v4h-4zM1060 786h4v4h-4zM1001 818h4v4h-4zM968 844h4v4h-4zM972 843h4v4h-4zM979 887h4v4h-4zM990 884h4v4h-4zM1188 854h4v4h-4zM1196 853h4v4h-4zM1193 865h4v4h-4zM1204 867h4v4h-4zM1168 879h4v4h-4zM1171 884h4v4h-4zM827 866h4v4h-4zM851 873h4v4h-4zM834 891h4v4h-4zM846 970h4v4h-4zM837 448h4v4h-4zM848 493h4v4h-4zM781 542h4v4h-4zM769 546h4v4h-4zM688 384h4v4h-4zM685 389h4v4h-4zM799 413h4v4h-4zM835 436h4v4h-4zM700 445h4v4h-4zM704 459h4v4h-4zM706 465h4v4h-4zM710 466h4v4h-4zM704 462h4v4h-4zM708 462h4v4h-4zM698 468h4v4h-4zM712 488h4v4h-4zM714 492h4v4h-4zM713 496h4v4h-4zM1460 149h4v4h-4zM1356 195h4v4h-4zM1319 214h4v4h-4zM1166 252h4v4h-4zM984 299h4v4h-4zM812 341h4v4h-4zM815 356h4v4h-4zM918 485h4v4h-4zM893 492h4v4h-4zM858 496h4v4h-4zM861 514h4v4h-4zM1084 439h4v4h-4zM1309 365h4v4h-4zM1437 326h4v4h-4zM1526 278h4v4h-4zM1486 211h4v4h-4zM1484 202h4v4h-4zM1482 192h4v4h-4z" fill="none" stroke="#ffff00" stroke-width="1" shape-rendering="crispEdges"/>
<path d="M657 120.5h7M660.5 117v7M665 273.5h7M668.5 270v7M691 418.5h7M694.5 415v7M700 418.5h7M703.5 415v7M686 435.5h7M689.5 432v7M498 735.5h7M501.5 732v7M687 435.5h7M690.5 432v7M591 646.5h7M594.5 643v7M709 515.5h7M712.5 512v7M722 524.5h7M725.5 521v7M746 652.5h7M749.5 649v7M813 531.5h7M816.5 528v7M816 543.5h7M819.5 540v7M892 517.5h7M895.5 514v7M781 783.5h7M784.5 780v7M1265 394.5h7M1268.5 391v7M1080 424.5h7M1083.5 421v7M1181 422.5h7M1184.5 419v7M1106 445.5h7M1109.5 442v7M1032 470.5h7M1035.5 467v7M971 479.5h7M974.5 476v7M959 493.5h7M962.5 490v7M939 564.5h7M942.5 561v7M1009 542.5h7M1012.5 539v7M1085 516.5h7M1088.5 513v7M1159 492.5h7M1162.5 489v7M1209 529.5h7M1212.5 526v7M1063 584.5h7M1066.5 581v7M996 608.5h7M999.5 605v7M972 676.5h7M975.5 673v7M987 775.5h7M990.5 772v7M1179 668.5h7M1182.5 665v7M1213 788.5h7M1216.5 785v7M910 902.5h7M913.5 899v7M1033 933.5h7M1036.5 930v7M1238 844.5h7M1241.5 841v7M807 878.5h7M810.5 875v7M741 882.5h7M744.5 879v7M1136 311.5h7M1139.5 308v7M1013 345.5h7M1016.5 342v7M824 398.5h7M827.5 395v7M1225 282.5h7M1228.5 279v7M1407 174.5h7M1410.5 171v7M1242 235.5h7M1245.5 232v7M1074 277.5h7M1077.5 274v7M897 322.5h7M900.5 319v7M951 331.5h7M954.5 328v7M1104 298.5h7M1107.5 295v7M1247 259.5h7M1250.5 256v7M1401 196.5h7M1404.5 193v7M1240 301.5h7M1243.5 298v7M1121 330.5h7M1124.5 327v7M1007 417.5h7M1010.5 414v7M1081 423.5h7M1084.5 420v7M972 479.5h7M975.5 476v7M1196 404.5h7M1199.5 401v7M1372 348.5h7M1375.5 345v7M1481 304.5h7M1484.5 301v7M1505 246.5h7M1508.5 243v7" fill="none" stroke="#ff0000" stroke-width="1" shape-rendering="crispEdges"/>
<g transform="translate(734 713)"><rect width="15" height="15" rx="1.500" fill="#3d8c14"/><path d="M8 12V4.500h4.500V12" fill="none" stroke="#fff" stroke-width="1.500"/><path d="M8.800 12V5.300h2.900V12z" fill="#5aa030"/><path d="M1.500 8h4M4 6l2 2-2 2" fill="none" stroke="#fff" stroke-width="1.300"/></g>
<g transform="translate(728 733)"><rect width="15" height="15" rx="1.500" fill="#3d8c14"/><path d="M8 12V4.500h4.500V12" fill="none" stroke="#fff" stroke-width="1.500"/><path d="M8.800 12V5.300h2.900V12z" fill="#5aa030"/><path d="M1.500 8h4M4 6l2 2-2 2" fill="none" stroke="#fff" stroke-width="1.300"/></g>
<g transform="translate(931.1 520.5)"><rect x="-2" y="-5.500" width="4" height="11" rx="1.500" fill="#e8e8e8"/><rect x="-2" y="-2.500" width="4" height="2.200" fill="#d82020"/><rect x="-2" y="1.500" width="4" height="2.200" fill="#d82020"/><ellipse cx="0" cy="5.500" rx="2.200" ry="1" fill="#a01818"/></g>
<g transform="translate(950.9 596.1)"><rect x="-2" y="-5.500" width="4" height="11" rx="1.500" fill="#e8e8e8"/><rect x="-2" y="-2.500" width="4" height="2.200" fill="#d82020"/><rect x="-2" y="1.500" width="4" height="2.200" fill="#d82020"/><ellipse cx="0" cy="5.500" rx="2.200" ry="1" fill="#a01818"/></g>
<g transform="translate(1001.4 497.4)"><rect x="-2" y="-5.500" width="4" height="11" rx="1.500" fill="#e8e8e8"/><rect x="-2" y="-2.500" width="4" height="2.200" fill="#d82020"/><rect x="-2" y="1.500" width="4" height="2.200" fill="#d82020"/><ellipse cx="0" cy="5.500" rx="2.200" ry="1" fill="#a01818"/></g>
<g transform="translate(1023.7 584.3)"><rect x="-2" y="-5.500" width="4" height="11" rx="1.500" fill="#e8e8e8"/><rect x="-2" y="-2.500" width="4" height="2.200" fill="#d82020"/><rect x="-2" y="1.500" width="4" height="2.200" fill="#d82020"/><ellipse cx="0" cy="5.500" rx="2.200" ry="1" fill="#a01818"/></g>
<g transform="translate(1076.6 473.2)"><rect x="-2" y="-5.500" width="4" height="11" rx="1.500" fill="#e8e8e8"/><rect x="-2" y="-2.500" width="4" height="2.200" fill="#d82020"/><rect x="-2" y="1.500" width="4" height="2.200" fill="#d82020"/><ellipse cx="0" cy="5.500" rx="2.200" ry="1" fill="#a01818"/></g>
<g transform="translate(1100 558.9)"><rect x="-2" y="-5.500" width="4" height="11" rx="1.500" fill="#e8e8e8"/><rect x="-2" y="-2.500" width="4" height="2.200" fill="#d82020"/><rect x="-2" y="1.500" width="4" height="2.200" fill="#d82020"/><ellipse cx="0" cy="5.500" rx="2.200" ry="1" fill="#a01818"/></g>
<g transform="translate(1151.3 448.9)"><rect x="-2" y="-5.500" width="4" height="11" rx="1.500" fill="#e8e8e8"/><rect x="-2" y="-2.500" width="4" height="2.200" fill="#d82020"/><rect x="-2" y="1.500" width="4" height="2.200" fill="#d82020"/><ellipse cx="0" cy="5.500" rx="2.200" ry="1" fill="#a01818"/></g>
<g transform="translate(1171.4 528.6)"><rect x="-2" y="-5.500" width="4" height="11" rx="1.500" fill="#e8e8e8"/><rect x="-2" y="-2.500" width="4" height="2.200" fill="#d82020"/><rect x="-2" y="1.500" width="4" height="2.200" fill="#d82020"/><ellipse cx="0" cy="5.500" rx="2.200" ry="1" fill="#a01818"/></g>
<g transform="translate(1244.9 497.5)"><rect x="-2" y="-5.500" width="4" height="11" rx="1.500" fill="#e8e8e8"/><rect x="-2" y="-2.500" width="4" height="2.200" fill="#d82020"/><rect x="-2" y="1.500" width="4" height="2.200" fill="#d82020"/><ellipse cx="0" cy="5.500" rx="2.200" ry="1" fill="#a01818"/></g>
<circle cx="969.300" cy="620.800" r="4.500" fill="#fff"/><rect x="969" y="619" width="10" height="3.500" fill="#fff"/>
<g transform="translate(1186 583)"><rect width="15" height="15" rx="1.500" fill="#3d8c14"/><path d="M8 12V4.500h4.500V12" fill="none" stroke="#fff" stroke-width="1.500"/><path d="M8.800 12V5.300h2.900V12z" fill="#5aa030"/><path d="M1.500 8h4M4 6l2 2-2 2" fill="none" stroke="#fff" stroke-width="1.300"/></g>
<g transform="translate(1139 610)"><rect width="15" height="15" rx="1.500" fill="#3d8c14"/><path d="M8 12V4.500h4.500V12" fill="none" stroke="#fff" stroke-width="1.500"/><path d="M8.800 12V5.300h2.900V12z" fill="#5aa030"/><path d="M1.500 8h4M4 6l2 2-2 2" fill="none" stroke="#fff" stroke-width="1.300"/></g>
<g transform="translate(1202 617)"><rect width="15" height="15" rx="1.500" fill="#3d8c14"/><path d="M8 12V4.500h4.500V12" fill="none" stroke="#fff" stroke-width="1.500"/><path d="M8.800 12V5.300h2.900V12z" fill="#5aa030"/><path d="M1.500 8h4M4 6l2 2-2 2" fill="none" stroke="#fff" stroke-width="1.300"/></g>
<g transform="translate(1150 644)"><rect width="15" height="15" rx="1.500" fill="#3d8c14"/><path d="M8 12V4.500h4.500V12" fill="none" stroke="#fff" stroke-width="1.500"/><path d="M8.800 12V5.300h2.900V12z" fill="#5aa030"/><path d="M1.500 8h4M4 6l2 2-2 2" fill="none" stroke="#fff" stroke-width="1.300"/></g>
<g transform="translate(1204 660)"><rect width="15" height="15" rx="1.500" fill="#3d8c14"/><path d="M8 12V4.500h4.500V12" fill="none" stroke="#fff" stroke-width="1.500"/><path d="M8.800 12V5.300h2.900V12z" fill="#5aa030"/><path d="M1.500 8h4M4 6l2 2-2 2" fill="none" stroke="#fff" stroke-width="1.300"/></g>
<g transform="translate(1161 688)"><rect width="15" height="15" rx="1.500" fill="#3d8c14"/><path d="M8 12V4.500h4.500V12" fill="none" stroke="#fff" stroke-width="1.500"/><path d="M8.800 12V5.300h2.900V12z" fill="#5aa030"/><path d="M1.500 8h4M4 6l2 2-2 2" fill="none" stroke="#fff" stroke-width="1.300"/></g>
<g transform="translate(1173 732)"><rect width="15" height="15" rx="1.500" fill="#3d8c14"/><path d="M8 12V4.500h4.500V12" fill="none" stroke="#fff" stroke-width="1.500"/><path d="M8.800 12V5.300h2.900V12z" fill="#5aa030"/><path d="M1.500 8h4M4 6l2 2-2 2" fill="none" stroke="#fff" stroke-width="1.300"/></g>
<g transform="translate(1233 738)"><rect width="15" height="15" rx="1.500" fill="#3d8c14"/><path d="M8 12V4.500h4.500V12" fill="none" stroke="#fff" stroke-width="1.500"/><path d="M8.800 12V5.300h2.900V12z" fill="#5aa030"/><path d="M1.500 8h4M4 6l2 2-2 2" fill="none" stroke="#fff" stroke-width="1.300"/></g>
<g transform="translate(1181 764)"><rect width="15" height="15" rx="1.500" fill="#3d8c14"/><path d="M8 12V4.500h4.500V12" fill="none" stroke="#fff" stroke-width="1.500"/><path d="M8.800 12V5.300h2.900V12z" fill="#5aa030"/><path d="M1.500 8h4M4 6l2 2-2 2" fill="none" stroke="#fff" stroke-width="1.300"/></g>
<g transform="translate(1218 846)"><rect width="15" height="15" rx="1.500" fill="#3d8c14"/><path d="M8 12V4.500h4.500V12" fill="none" stroke="#fff" stroke-width="1.500"/><path d="M8.800 12V5.300h2.900V12z" fill="#5aa030"/><path d="M1.500 8h4M4 6l2 2-2 2" fill="none" stroke="#fff" stroke-width="1.300"/></g>
<g transform="translate(745.500 435)"><rect width="16" height="15" rx="3" fill="#b8bce8"/><path d="M3 5h10M5.500 5L3 12M10.500 5L13 12M1.500 8.500h13" stroke="#151550" stroke-width="1.700" fill="none"/></g>
<g transform="translate(683 468)"><rect width="14.500" height="15.500" fill="#fff"/><path d="M3.500 6h5.500l-.7 7H4.200z" fill="#111"/><path d="M3 5h6.500" stroke="#111" stroke-width="1.200"/><path d="M10.500 4l1.500 4-1 5" stroke="#111" stroke-width="1.200" fill="none"/><circle cx="10.300" cy="2.800" r="1.100" fill="#111"/></g>
<g transform="translate(698 475)"><rect width="8.500" height="8.500" fill="#20205a" stroke="#50508a" stroke-width=".8"/><rect x="2.200" y="3.400" width="4" height="1.600" fill="#fff"/></g>
<g transform="translate(842 515)"><rect width="16" height="11" fill="#90a8e0"/><path d="M1.500 9.500h13M1.500 6.500h13M3.500 3.500v7M7 3.500v7M10.500 3.500v7M13.500 3.500v7" stroke="#1a1a3a" stroke-width="1.100" fill="none"/></g>
<text x="752" y="780.9" font-size="18" fill="#c8c8c8" text-anchor="middle">8</text>
<rect x="839" y="960" width="9" height="9" fill="#20205a" stroke="#50508a" stroke-width=".8"/><rect x="841.5" y="963.7" width="4" height="1.600" fill="#fff"/>
<text x="850.5" y="968.8" font-size="18" fill="#fff" stroke="#fff" stroke-width=".5">Mittelberg</text>
<rect x="849.5" y="979" width="9" height="9" fill="#20205a" stroke="#50508a" stroke-width=".8"/><rect x="852" y="982.7" width="4" height="1.600" fill="#fff"/>
<text x="860.8" y="987.5" font-size="18" fill="#fff" stroke="#fff" stroke-width=".5">Mittelberg</text>
<text x="764.200" y="449.700" font-size="18" fill="#fff" stroke="#fff" stroke-width=".5">Spielplatz Weidenbreite</text>
<text x="710.400" y="485.400" font-size="18" fill="#fff" stroke="#fff" stroke-width=".5">Weidenbreite</text>
<text x="711.800" y="487.800" font-size="18" fill="#fff" stroke="#fff" stroke-width=".5">Weidenbreite</text>
<text x="908" y="365.600" font-size="18" fill="#cdcdcd" stroke="#cdcdcd" stroke-width=".4" text-anchor="middle">Himmelsruh</text>
<text x="908" y="365.600" font-size="18" fill="#cdcdcd" stroke="#cdcdcd" stroke-width=".4" text-anchor="middle">Mittelberg</text>
<text x="679" y="530.5" font-size="18" fill="#c8c8c8" stroke="#c8c8c8" stroke-width=".3" text-anchor="middle">1</text>
<text x="783" y="635" font-size="18" fill="#c8c8c8" stroke="#c8c8c8" stroke-width=".3" text-anchor="middle">3</text>
<text x="715" y="650.5" font-size="18" fill="#c8c8c8" stroke="#c8c8c8" stroke-width=".3" text-anchor="middle">4</text>
<text transform="translate(660.5 146) rotate(87.7)" font-size="11" text-anchor="middle" dy="3.800" fill="#000" stroke="#c4c4c4" stroke-width="2.200" stroke-linejoin="round" paint-order="stroke">Himmelsruh</text>
<text transform="translate(709 509) rotate(71.8)" font-size="11" text-anchor="middle" dy="3.800" fill="#000" stroke="#c4c4c4" stroke-width="2.200" stroke-linejoin="round" paint-order="stroke">Himmelsruh</text>
<text transform="translate(535 703.5) rotate(-43)" font-size="11" text-anchor="middle" dy="3.800" fill="#000" stroke="#c4c4c4" stroke-width="2.200" stroke-linejoin="round" paint-order="stroke">Kehrstraße</text>
<text transform="translate(753.8 563) rotate(-12.7)" font-size="11" text-anchor="middle" dy="3.800" fill="#000" stroke="#c4c4c4" stroke-width="2.200" stroke-linejoin="round" paint-order="stroke">Kehrstraße</text>
<text transform="translate(1047 466.7) rotate(-18.5)" font-size="11" text-anchor="middle" dy="3.800" fill="#000" stroke="#c4c4c4" stroke-width="2.200" stroke-linejoin="round" paint-order="stroke">Kehrstraße</text>
<text transform="translate(761 699.7) rotate(74.6)" font-size="11" text-anchor="middle" dy="3.800" fill="#000" stroke="#c4c4c4" stroke-width="2.200" stroke-linejoin="round" paint-order="stroke">Weidenbreite</text>
<text transform="translate(999.5 810.3) rotate(73.4)" font-size="11" text-anchor="middle" dy="3.800" fill="#000" stroke="#c4c4c4" stroke-width="2.200" stroke-linejoin="round" paint-order="stroke">Mittelbergring</text>
<text transform="translate(1171.2 630) rotate(71.1)" font-size="11" text-anchor="middle" dy="3.800" fill="#000" stroke="#c4c4c4" stroke-width="2.200" stroke-linejoin="round" paint-order="stroke">Mittelbergring</text>
<defs><linearGradient id="sl" x1="0" y1="0" x2="0" y2="1"><stop offset="0" stop-color="#c8c8c8"/><stop offset=".5" stop-color="#f0f0f0"/><stop offset="1" stop-color="#a8a8a8"/></linearGradient><linearGradient id="th" x1="0" y1="0" x2="0" y2="1"><stop offset="0" stop-color="#ffffff"/><stop offset=".5" stop-color="#f4f4f4"/><stop offset="1" stop-color="#dcdcdc"/></linearGradient></defs>
<rect x="51" y="83.500" width="101" height="6.500" rx="1" fill="url(#sl)"/>
<rect x="109" y="80" width="28" height="13" rx="1.500" fill="url(#th)" stroke="#d8d8d8" stroke-width=".6"/>
<path d="M51.500 94v11M150.500 94v11M51 99.500h100M75.500 97v5M100.500 97v5M125.500 97v5" stroke="#fff" stroke-width="1" fill="none" shape-rendering="crispEdges"/>
<text x="50.500" y="116" font-size="12" fill="#fff">0</text>
<text x="131" y="116" font-size="12" fill="#fff" letter-spacing=".4">46.6 m</text>
</g></svg>
<div class="sbtn" style="left:1px;top:64px;width:38px;height:8px"></div>
<svg style="left:16px;top:66px" width="8" height="5" viewBox="0 0 8 5"><path d="M0 5l4-5 4 5z" fill="#000"/></svg>
<div class="tog" style="left:3px;top:75px;width:34px;height:34px"></div>
<svg style="left:7px;top:80px" width="26" height="26" viewBox="0 0 26 26"><path d="M3 8l15-4M3 8l5 13" stroke="#222" stroke-width="1" fill="none"/><path d="M3 8l5 13" stroke="#e0b0a8" stroke-width="1"/><rect x="1" y="6" width="3.5" height="3.5" fill="#fff" stroke="#e03010" stroke-width="1"/><rect x="16" y="2" width="3.5" height="3.5" fill="#fff" stroke="#e03010" stroke-width="1"/><rect x="6.5" y="19" width="3.5" height="3.5" fill="#fff" stroke="#f0a098" stroke-width="1"/><path d="M14.500 14V8.500a1 1 0 0 1 2 0V7a1 1 0 0 1 2 0v1a1 1 0 0 1 2 0v1a1 1 0 0 1 2 0v6c0 2-1 3-3 3h-3c-1.500 0-2.500-1-3.500-3l-1-2c-.5-1.200 1-1.800 1.700-.8z" fill="#fff" stroke="#000" stroke-width="1"/>
<path d="M14 21l4-3M18 18l-2.500.2M18 18l-.2 2.500" stroke="#000" stroke-width="1" fill="none"/></svg>
<svg style="left:10px;top:119px" width="20" height="18" viewBox="0 0 20 18"><ellipse cx="11" cy="6.500" rx="8" ry="4.500" fill="none" stroke="#aaa" stroke-width="2.500"/><ellipse cx="11" cy="6.500" rx="8" ry="4.500" fill="none" stroke="#d8d8d8" stroke-width="1"/><path d="M5 10c-2 2-1 5 1 6M4 13l3 1" stroke="#999" stroke-width="1.800" fill="none"/></svg>
<svg style="left:8px;top:152px" width="24" height="24" viewBox="0 0 24 24"><path d="M4 20L19 5" stroke="#f4e000" stroke-width="3"/><path d="M4 20L19 5" stroke="#101060" stroke-width="1.300"/><rect x="1.5" y="17.5" width="4" height="4" fill="#fff" stroke="#e03010" stroke-width="1"/><rect x="16.5" y="2.5" width="5" height="5" fill="#fff" stroke="#e03010" stroke-width="1"/><rect x="15.500" y="1.500" width="7" height="7" fill="none" stroke="#f4e000" stroke-width="1"/></svg>
<svg style="left:8px;top:188px" width="24" height="24" viewBox="0 0 24 24"><circle cx="10" cy="10" r="8.500" fill="#c9dcf2" stroke="#9aa0a8" stroke-width="1.800"/><path d="M2.500 10a7.500 7.500 0 0 0 15 0z" fill="#8fb4e6"/><path d="M16 16l6 6" stroke="#777" stroke-width="3" stroke-linecap="round"/></svg>
<svg style="left:7px;top:226px" width="26" height="24" viewBox="0 0 26 24"><path d="M3 5.500l10-2 9-1.500" stroke="#222" fill="none"/><rect x="1" y="3.5" width="3.5" height="3.5" fill="#fff" stroke="#e03010" stroke-width="1"/><rect x="11" y="1.5" width="3.5" height="3.5" fill="#fff" stroke="#e03010" stroke-width="1"/><rect x="21" y="0" width="3.5" height="3.5" fill="#fff" stroke="#f0b0a8" stroke-width="1"/><path d="M12 10h12l-1.500 12h-9z" fill="#888" stroke="#444"/><ellipse cx="18" cy="10" rx="6.500" ry="2.500" fill="#bbb" stroke="#444"/><path d="M14.500 13v7M17 13.500v7M19.500 13.500v7M22 13v7" stroke="#555" stroke-width=".8"/></svg>
<svg style="left:9px;top:260px" width="22" height="23" viewBox="0 0 22 23"><path d="M4 20V12L13 3M12 20v-8l6-5" stroke="#222" fill="none"/><rect x="2" y="18" width="3.5" height="3.5" fill="#fff" stroke="#e03010" stroke-width="1"/><rect x="2" y="10" width="3.5" height="3.5" fill="#fff" stroke="#e03010" stroke-width="1"/><rect x="11" y="1" width="3.5" height="3.5" fill="#fff" stroke="#e03010" stroke-width="1"/><rect x="10" y="18" width="3.5" height="3.5" fill="#fff" stroke="#e03010" stroke-width="1"/><rect x="10" y="10.5" width="3.5" height="3.5" fill="#fff" stroke="#e03010" stroke-width="1"/><rect x="16" y="5" width="3.5" height="3.5" fill="#fff" stroke="#e03010" stroke-width="1"/></svg>
<svg style="left:9px;top:296px" width="22" height="24" viewBox="0 0 22 24"><path d="M3 3l3 9-4 10M16 1l3 4-2 5-2 5 3 7" stroke="#222" fill="none"/><path d="M7 12.500h5M12 12.500l-2.500-2M12 12.500l-2.500 2" stroke="#000" stroke-width="1.200" fill="none"/><rect x="1" y="1" width="3.5" height="3.5" fill="#fff" stroke="#e03010" stroke-width="1"/><rect x="4.5" y="10.5" width="3.5" height="3.5" fill="#fff" stroke="#e03010" stroke-width="1"/><rect x="0.5" y="20" width="3.5" height="3.5" fill="#fff" stroke="#e03010" stroke-width="1"/><rect x="14" y="0" width="3.5" height="3.5" fill="#fff" stroke="#e03010" stroke-width="1"/><rect x="17.5" y="3.5" width="3.5" height="3.5" fill="#fff" stroke="#e03010" stroke-width="1"/><rect x="15.5" y="8.5" width="3.5" height="3.5" fill="#fff" stroke="#e03010" stroke-width="1"/><rect x="13.5" y="13.5" width="3.5" height="3.5" fill="#fff" stroke="#e03010" stroke-width="1"/><rect x="16" y="20" width="3.5" height="3.5" fill="#fff" stroke="#e03010" stroke-width="1"/></svg>
<svg style="left:7px;top:333px" width="26" height="16" viewBox="0 0 26 16"><path d="M3 6.500l14-2.500" stroke="#222" fill="none"/><rect x="1" y="5" width="3.5" height="3.5" fill="#fff" stroke="#207020" stroke-width="1"/><rect x="15.5" y="1" width="3.5" height="3.5" fill="#fff" stroke="#207020" stroke-width="1"/><path d="M15.500 9V5.500a1 1 0 0 1 2 0V5a1 1 0 0 1 2 0v.5a1 1 0 0 1 2 0V6a1 1 0 0 1 2 0v5c0 2-1 3-3 3h-3c-1.500 0-2.500-1-3.500-2.500l-1-1.500c-.5-1 1-1.600 1.700-.8z" fill="#fff" stroke="#000" stroke-width="1"/><path d="M17 10v2M19 10v2M21 10v2" stroke="#4a4" stroke-width=".8"/></svg>
<svg style="left:10px;top:369px" width="21" height="22" viewBox="0 0 21 22"><path d="M2 20l2.500-6L15 2.500c1.500-1.500 4.500 1 3.500 3L8 17z" fill="#f0a030" stroke="#a06a10" stroke-width=".8"/><path d="M15 2.500c1.500-1.500 4.500 1 3.500 3l-1.500 1.500-3.500-3z" fill="#e84a4a"/><path d="M2 20l2.500-6 3.500 3z" fill="#e8d0a0"/><path d="M2 20l1-2.300 1.300 1.300z" fill="#333"/></svg>
<svg style="left:10px;top:406px" width="19" height="19" viewBox="0 0 19 19"><path d="M9.500 0l3.500 4h-2.500v4.500H15V6l4 3.500-4 3.500v-2.500h-4.500V15H13l-3.500 4L6 15h2.500v-4.500H4V13L0 9.500 4 6v2.500h4.500V4H6z" fill="#000"/></svg>
<svg style="left:12px;top:473px" width="17" height="12" viewBox="0 0 17 12"><path d="M0 0l8 6-8 6zM8.500 0l8 6-8 6z" fill="#000"/></svg>
<div class="a" style="left:8px;top:531px;width:23px;height:1px;background:#c4c5c7"></div>
<div class="tog" style="left:3px;top:543px;width:34px;height:34px"></div>
<div class="tog" style="left:3px;top:579px;width:34px;height:34px"></div>
<div class="tog" style="left:3px;top:615px;width:34px;height:34px"></div>
<div class="tog" style="left:3px;top:651px;width:34px;height:34px"></div>
<div class="tog" style="left:3px;top:831px;width:34px;height:34px"></div>
<svg style="left:9px;top:549px" width="23" height="22" viewBox="0 0 23 22"><g fill="#f4f4f4" stroke="#9a9a9a" stroke-width=".8"><path d="M1 19l3-6h18l-3 6z"/><path d="M1 15.500l3-6h18l-3 6z"/><path d="M1 12l3-6h18l-3 6z"/><path d="M1 8.500l3-6h18l-3 6z" fill="#e4e4e4"/></g></svg>
<svg style="left:8px;top:584px" width="24" height="24" viewBox="0 0 24 24"><path d="M1.500 3l5-1.500L23 13.500l-4.500 8.500L2 10.500z" fill="#f4f4f4" stroke="#9a9a9a"/><circle cx="5" cy="5" r="1.500" fill="#fff" stroke="#888" stroke-width=".8"/><path d="M9 7l12 8-2.500 4.500L6.500 11.500z" fill="#4a7fc0" stroke="#2a5590" stroke-width=".6"/><path d="M10 10l8 5.500" stroke="#cfe0f5" stroke-dasharray="1.500 1" stroke-width="1"/></svg>
<svg style="left:9px;top:621px" width="23" height="22" viewBox="0 0 23 22"><rect x=".5" y=".5" width="22" height="21" fill="#f8f8f8" stroke="#9a9a9a"/><path d="M5.500 6l3 9" stroke="#222" stroke-width="1.400"/><rect x="3.5" y="4" width="3.5" height="3.5" fill="#fff" stroke="#e03010" stroke-width="1"/><rect x="11" y="6.5" width="3.5" height="3.5" fill="#fff" stroke="#e03010" stroke-width="1"/><rect x="7" y="14" width="3.5" height="3.5" fill="#fff" stroke="#e03010" stroke-width="1"/><rect x="17.500" y="0.500" width="5" height="21" fill="#f4f4f4" stroke="#aaa" stroke-width=".6"/><path d="M18 5.500l2-3 2 3zM18 16.500l2 3 2-3z" fill="#000"/><rect x="18.500" y="8" width="3" height="3.500" fill="#ddd" stroke="#bbb" stroke-width=".5"/><rect x="18.500" y="12" width="3" height="3" fill="#ccc"/></svg>
<svg style="left:9px;top:657px" width="23" height="22" viewBox="0 0 23 22"><rect x=".5" y=".5" width="22" height="21" fill="#f8f8f8" stroke="#b0b0b0"/><circle cx="6" cy="18" r="3.500" fill="#fff"/><circle cx="13" cy="8" r="3" fill="#e4e4e4"/><path d="M3 12h7l2 3v4" stroke="#ddd" stroke-width="2" fill="none"/><rect x="17.500" y="0.500" width="5" height="21" fill="#f4f4f4" stroke="#aaa" stroke-width=".6"/><path d="M18 5.500l2-3 2 3zM18 16.500l2 3 2-3z" fill="#000"/><rect x="18.500" y="8" width="3" height="3.500" fill="#ddd" stroke="#bbb" stroke-width=".5"/><rect x="18.500" y="12" width="3" height="3" fill="#ccc"/></svg>
<svg style="left:9px;top:693px" width="23" height="22" viewBox="0 0 23 22"><rect x=".5" y=".5" width="22" height="21" fill="#f8f8f8" stroke="#9a9a9a"/><rect x="1" y="7" width="15" height="14" fill="#f0e0a0"/><path d="M1 10h6v5H1z" fill="#f0b0b0"/><path d="M7 14h8v7H7z" fill="#80b0e8"/><circle cx="4" cy="9" r="2.500" fill="#60c040"/><path d="M8 17L15 4l2.500 1.500L10 18z" fill="#8a4a20"/><rect x="17.500" y="0.500" width="5" height="21" fill="#f4f4f4" stroke="#aaa" stroke-width=".6"/><path d="M18 5.500l2-3 2 3zM18 16.500l2 3 2-3z" fill="#000"/><rect x="18.500" y="8" width="3" height="3.500" fill="#ddd" stroke="#bbb" stroke-width=".5"/><rect x="18.500" y="12" width="3" height="3" fill="#ccc"/></svg>
<svg style="left:9px;top:729px" width="23" height="22" viewBox="0 0 23 22"><rect x=".5" y=".5" width="22" height="21" fill="#f8f8f8" stroke="#9a9a9a"/><rect x="17.500" y="0.500" width="5" height="21" fill="#f4f4f4" stroke="#aaa" stroke-width=".6"/><path d="M18 5.500l2-3 2 3zM18 16.500l2 3 2-3z" fill="#000"/><rect x="18.500" y="8" width="3" height="3.500" fill="#ddd" stroke="#bbb" stroke-width=".5"/><rect x="18.500" y="12" width="3" height="3" fill="#ccc"/><path d="M0 11l5-5v3c5 0 8 3 6 9-1-3-3-4-6-4v3z" fill="#60c030" stroke="#308010" stroke-width=".6"/><path d="M16 11l-5-5v3c-5 0-7 4-4 9 0-3 1-4 4-4v3z" fill="#f0c020" stroke="#b08000" stroke-width=".6"/></svg>
<svg style="left:9px;top:765px" width="23" height="22" viewBox="0 0 23 22"><rect x=".5" y=".5" width="22" height="21" fill="#f8f8f8" stroke="#9a9a9a"/><circle cx="6" cy="9" r="3.500" fill="#eee" stroke="#999" stroke-width=".8"/><circle cx="12" cy="9" r="3.500" fill="#eee" stroke="#999" stroke-width=".8"/><path d="M1 21c0-6 3-8 8-8s8 2 8 8z" fill="#eee" stroke="#999" stroke-width=".8"/><rect x="17.500" y="0.500" width="5" height="21" fill="#f4f4f4" stroke="#aaa" stroke-width=".6"/><path d="M18 5.500l2-3 2 3zM18 16.500l2 3 2-3z" fill="#000"/><rect x="18.500" y="8" width="3" height="3.500" fill="#ddd" stroke="#bbb" stroke-width=".5"/><rect x="18.500" y="12" width="3" height="3" fill="#ccc"/></svg>
<svg style="left:8px;top:802px" width="24" height="21" viewBox="0 0 24 21"><g fill="#f4f4f4" stroke="#9a9a9a" stroke-width=".8"><path d="M2 19l2-4h18l-2 4z"/><path d="M2 16l2-4h18l-2 4z"/><path d="M2 6l2-4h18l-2 4z"/></g><path d="M0 4h4V1l7 6.500L4 14v-3H0zM24 4h-4V1l-7 6.500 7 6.500v-3h4z" fill="#3a7ad0" stroke="#1a4a90" stroke-width=".6"/></svg>
<svg style="left:8px;top:836px" width="24" height="24" viewBox="0 0 24 24"><path d="M1 13l4-3 4 6C12 9 17 3 23 0l.5 1.500C17 7 13 14 10 23H7.500z" fill="#1763a8" stroke="#0a3a70" stroke-width=".6"/><path d="M9 16C12 9 17 3 23 0" stroke="#6ab0e8" stroke-width="1" fill="none"/></svg>
<svg style="left:10px;top:871px" width="21" height="25" viewBox="0 0 21 25"><ellipse cx="10.500" cy="3.500" rx="9.500" ry="3" fill="#f0f0f4" stroke="#9a9aa4"/><path d="M1 4l8 11v8.500l3 1V15l8-11" fill="#e4e4ec" stroke="#9a9aa4"/><path d="M4 6l6 8" stroke="#fff" stroke-width="1.500"/></svg>
<svg style="left:9px;top:908px" width="23" height="24" viewBox="0 0 23 24"><path d="M1 9l4 2h12l4-2-1.500 12-3 1.500H6L3 21z" fill="#d08888" stroke="#905050"/><path d="M5 11l1 11.500M17 11l-1 11.500" stroke="#905050" stroke-width=".8"/><rect x="5" y="4" width="4.5" height="4.5" fill="#fff" stroke="#e03010" stroke-width="1"/><rect x="13" y="1" width="4.5" height="4.5" fill="#fff" stroke="#e03010" stroke-width="1"/></svg>
<svg style="left:9px;top:945px" width="23" height="22" viewBox="0 0 23 22"><path d="M12 1c6 0 7 3 5 6-1 2 1 3 3 3 3 0 3 4 0 7-4 4-11 5-16 2C0 16 0 8 4 4c2-2 5-3 8-3z" fill="#b0b8d8" stroke="#6870a0"/><circle cx="7" cy="6" r="1.500" fill="#e02020"/><circle cx="4" cy="11" r="1.500" fill="#2040e0"/><circle cx="7" cy="16" r="1.500" fill="#f0e020"/><circle cx="13" cy="13.500" r="1.500" fill="#30a030"/><circle cx="17" cy="9.500" r="1.700" fill="#222"/></svg>
<div class="a" style="left:0;top:975px;width:40px;height:20px;overflow:hidden"><div class="tog" style="left:3px;top:0;width:34px;height:34px"></div><svg style="left:13px;top:6px" width="14" height="14" viewBox="0 0 14 14"><circle cx="7" cy="7" r="7" fill="#d82020"/><path d="M4 4l6 6M10 4l-6 6" stroke="#fff" stroke-width="1.800"/></svg></div>
<div class="sbtn" style="left:1px;top:995px;width:38px;height:8px"></div>
<svg style="left:16px;top:997px" width="8" height="5" viewBox="0 0 8 5"><path d="M0 0l4 5 4-5z" fill="#000"/></svg>
<div class="a" style="left:1631px;top:63px;width:289px;height:1px;background:#1a1a1a"></div>
<div class="a" style="left:1628px;top:64px;width:2px;height:939px;background:#f8f8f9"></div>
<div class="a" style="left:1631px;top:64px;width:287px;height:1px;background:#fdfdfd"></div>
<div class="panel" style="left:1632px;top:65px;width:286px;height:156px"></div>
<svg style="left:1636px;top:71px" width="12" height="11" viewBox="0 0 12 11"><rect x=".75" y=".75" width="10" height="9.500" rx="1.500" fill="#fff" stroke="#000" stroke-width="1.300"/><path d="M3 4.500h5.500l-2.750 3.500z" fill="#000"/></svg>
<svg style="left:1650px;top:67px" width="17" height="15" viewBox="0 0 17 15"><g fill="#f4f4f4" stroke="#b4b4b4" stroke-width=".8"><path d="M1 14l2-5h13l-2 5z"/><path d="M1 11l2-5h13l-2 5z"/><path d="M1 8l2-5h13l-2 5z"/><path d="M1 5.500l2-5h13l-2 5z" fill="#e6e6e6"/></g></svg>
<div class="t " style="left:1674px;top:65.5px;">Layers</div>
<div class="sbtn" style="left:1886px;top:69px;width:14px;height:14px"></div><svg style="left:1885px;top:71px" width="16" height="10" viewBox="0 0 16 10"><path d="M0 5l6-.8v1.600z" fill="#a8a8a8"/><path d="M7 1v8" stroke="#333" stroke-width="1.600"/><path d="M8 2.500h4v5H8z" fill="#a0a0a0" stroke="#666" stroke-width=".6"/><path d="M13 .3v9.400" stroke="#333" stroke-width="1.300"/></svg><div class="sbtn" style="left:1902px;top:69px;width:14px;height:14px"></div><svg style="left:1904px;top:71px" width="10" height="10" viewBox="0 0 10 10"><rect x=".6" y=".6" width="8.800" height="8.800" rx="1.500" fill="#8c8c86" stroke="#7c7c76" stroke-width="1"/><path d="M2.300 2.300l5.400 5.400M7.700 2.300l-5.400 5.400" stroke="#fff" stroke-width="2"/></svg>
<div class="box" style="left:1634px;top:86px;width:283px;height:102px"></div>
<div class="sel" style="left:1681px;top:87px;width:235px;height:16px"></div>
<svg style="left:1635px;top:89px" width="12" height="12" viewBox="0 0 12 12"><circle cx="6" cy="6" r="5.300" fill="#10901c" stroke="#0a6a12" stroke-width=".6"/><path d="M3 6l2.300 2.500L9 3.500" stroke="#fff" stroke-width="1.700" fill="none"/></svg>
<svg style="left:1666px;top:90px" width="13" height="9" viewBox="0 0 13 9"><path d="M.5 4.500L4 1h5l3.500 3.500L9 8H4z" fill="#fff" stroke="#555" stroke-width=".8"/><ellipse cx="6.500" cy="4.500" rx="3" ry="2.800" fill="#2050b0"/><circle cx="5.500" cy="4" r="1.200" fill="#fff"/></svg>
<svg style="left:1683px;top:88px" width="14" height="15" viewBox="0 0 14 15"><rect x="0" y="0" width="13" height="13" fill="#c8e8a8"/><path d="M0 4l4 2 3-4M5 13l2-5 6 1" stroke="#f0d8b0" stroke-width="1.500" fill="none"/><circle cx="9" cy="4" r="3.800" fill="#a8d0a0" stroke="#6a8a70" stroke-width="1.300"/><path d="M6 8l-5 6" stroke="#7a5010" stroke-width="2.500" stroke-linecap="round"/></svg>
<div class="t " style="left:1702px;top:86.5px;color:#fff;font-weight:bold;letter-spacing:.28px;-webkit-text-stroke:0">Data Layer 1</div>
<div class="btn dis" style="left:1636px;top:189px;width:38px;height:30px"></div>
<div class="btn dis" style="left:1676px;top:189px;width:38px;height:30px"></div>
<div class="btn dis" style="left:1716px;top:189px;width:38px;height:30px"></div>
<div class="btn " style="left:1756px;top:189px;width:38px;height:30px"></div>
<div class="btn " style="left:1796px;top:189px;width:38px;height:30px"></div>
<div class="btn dis" style="left:1836px;top:189px;width:38px;height:30px"></div>
<div class="btn " style="left:1876px;top:189px;width:38px;height:30px"></div>
<svg style="left:1647px;top:195px" width="16" height="18" viewBox="0 0 16 18"><path d="M8 1l7 8h-4v8H5V9H1z" fill="#9a9a9a"/></svg>
<svg style="left:1687px;top:195px" width="16" height="18" viewBox="0 0 16 18"><path d="M8 17l7-8h-4V1H5v8H1z" fill="#9a9a9a"/></svg>
<svg style="left:1725px;top:193px" width="20" height="20" viewBox="0 0 20 20"><g fill="#9a9a9a"><path d="M1 18l3-4h14l-3 4z"/><path d="M1 14.500l3-4h14l-3 4z"/><path d="M1 11l3-4h14l-3 4z"/><circle cx="14" cy="5" r="4"/></g><path d="M12 5l1.500 1.500 2.500-3" stroke="#bbb" fill="none"/></svg>
<svg style="left:1764px;top:192px" width="22" height="24" viewBox="0 0 22 24"><path d="M1 21L21 2" stroke="#111" stroke-width="1.200"/><path d="M2 5.500L5 3h3l3 2.500L8 8H5z" fill="#fff" stroke="#555" stroke-width=".6"/><circle cx="6.500" cy="5.500" r="2" fill="#2050b0"/><circle cx="15" cy="17" r="4.300" fill="#fff" stroke="#e01020" stroke-width="1.400"/><circle cx="15" cy="17" r="2" fill="#2050b0"/><path d="M12 20l6-6" stroke="#e01020" stroke-width="1.200"/></svg>
<svg style="left:1812px;top:193px" width="6" height="22" viewBox="0 0 6 22"><defs><linearGradient id="gop" x1="0" y1="0" x2="0" y2="1"><stop offset="0" stop-color="#000"/><stop offset=".6" stop-color="#888"/><stop offset="1" stop-color="#fff"/></linearGradient></defs><rect x="0" y="0" width="5" height="21" fill="url(#gop)"/></svg>
<svg style="left:1845px;top:193px" width="20" height="21" viewBox="0 0 20 21"><path d="M1 1l8 9c1 2 1.500 4 1 6M19 1L9.500 12c-2 3-1 7 1.500 7s3-3 1.500-5.500" stroke="#9a9a9a" stroke-width="2" fill="none"/></svg>
<svg style="left:1887px;top:195px" width="16" height="18" viewBox="0 0 16 18"><path d="M1.500 4h13l-1.500 13h-10z" fill="#777" stroke="#333"/><ellipse cx="8" cy="4" rx="7" ry="3" fill="#aaa" stroke="#333"/><ellipse cx="8" cy="3" rx="2.500" ry="1" fill="#333"/><path d="M4.500 8v8M7 8.500v8M9.500 8.500v8M12 8v8" stroke="#444" stroke-width=".8"/></svg>
<div class="panel" style="left:1632px;top:228px;width:286px;height:233px"></div>
<svg style="left:1636px;top:234px" width="12" height="11" viewBox="0 0 12 11"><rect x=".75" y=".75" width="10" height="9.500" rx="1.500" fill="#fff" stroke="#000" stroke-width="1.300"/><path d="M3 4.500h5.500l-2.750 3.500z" fill="#000"/></svg>
<svg style="left:1650px;top:230px" width="16" height="16" viewBox="0 0 16 16"><path d="M1 2.500l4-1.500 10 8-3.500 6L1.500 7.500z" fill="#f4f4f4" stroke="#aaa" stroke-width=".8"/><path d="M6 4.500l7.500 5.500-1.800 3L4.500 7.500z" fill="#4a7fc0"/><circle cx="3.300" cy="3.500" r="1" fill="#fff" stroke="#888" stroke-width=".6"/></svg>
<div class="t " style="left:1674px;top:228.5px;letter-spacing:.12px">Tags: 1 / Memberships: 0</div>
<div class="sbtn" style="left:1886px;top:232px;width:14px;height:14px"></div><svg style="left:1885px;top:234px" width="16" height="10" viewBox="0 0 16 10"><path d="M0 5l6-.8v1.600z" fill="#a8a8a8"/><path d="M7 1v8" stroke="#333" stroke-width="1.600"/><path d="M8 2.500h4v5H8z" fill="#a0a0a0" stroke="#666" stroke-width=".6"/><path d="M13 .3v9.400" stroke="#333" stroke-width="1.300"/></svg><div class="sbtn" style="left:1902px;top:232px;width:14px;height:14px"></div><svg style="left:1904px;top:234px" width="10" height="10" viewBox="0 0 10 10"><rect x=".6" y=".6" width="8.800" height="8.800" rx="1.500" fill="#8c8c86" stroke="#7c7c76" stroke-width="1"/><path d="M2.300 2.300l5.400 5.400M7.700 2.300l-5.400 5.400" stroke="#fff" stroke-width="2"/></svg>
<div class="box" style="left:1634px;top:249px;width:283px;height:179px"></div>
<svg style="left:1642px;top:253px" width="13" height="13" viewBox="0 0 13 13"><path d="M6.500 12C5 8 3 5 1 3c3 1 4 3 4.500 5C5.500 5 6 2 7 0c.5 3 .5 5 .5 8C8.500 6 10 4 12 3c-1.500 3-3 6-3.500 9z" fill="#1a8a1a"/><ellipse cx="6.500" cy="12" rx="4" ry="1" fill="#888" opacity=".6"/></svg>
<div class="t " style="left:1660px;top:251.5px;letter-spacing:-.12px">Geography/Nature/Scrub …</div>
<div class="box" style="left:1636px;top:271px;width:279px;height:24px;border-color:#8e8f91;box-shadow:inset 0 1px 0 #d4d5d7"></div>
<div class="hdr" style="left:1636px;top:297px;width:139px;height:22px"></div>
<div class="hdr" style="left:1777px;top:297px;width:138px;height:22px"></div>
<div class="t " style="left:1639px;top:299.5px;">Key</div>
<div class="t " style="left:1780px;top:299.5px;">Value</div>
<div class="sel" style="left:1635px;top:320px;width:281px;height:18px"></div>
<div class="a" style="left:1775px;top:320px;width:1px;height:18px;background:#8a8b8d"></div>
<div class="t " style="left:1637px;top:319.5px;color:#fff;-webkit-text-stroke:0">natural</div>
<div class="t " style="left:1778px;top:319.5px;color:#fff;-webkit-text-stroke:0">scrub</div>
<div class="btn" style="left:1635px;top:430px;width:92px;height:29px"></div>
<div class="btn" style="left:1729px;top:430px;width:92px;height:29px"></div>
<div class="btn" style="left:1823px;top:430px;width:92px;height:29px"></div>
<svg style="left:1662px;top:437px" width="14" height="14" viewBox="0 0 14 14"><path d="M5.500 1h3v4.500H13v3H8.500V13h-3V8.500H1v-3h4.500z" fill="#d8d8d8" stroke="#8a8a8a" stroke-width=".9"/></svg>
<div class="t " style="left:1681px;top:435.5px;">Add</div>
<svg style="left:1755px;top:435px" width="17" height="18" viewBox="0 0 17 18"><path d="M1.500 1.500h11v15h-11z" fill="#f8f8f8" stroke="#999"/><path d="M3.500 4.500h7M3.500 6.500h7M3.500 8.500h7M3.500 10.500h4" stroke="#bbb"/><path d="M7 14l1-3 7-7 2 2-7 7z" fill="#f0a030" stroke="#a06a10" stroke-width=".7"/></svg>
<div class="t " style="left:1775px;top:435.5px;">Edit</div>
<svg style="left:1841px;top:435px" width="16" height="18" viewBox="0 0 16 18"><path d="M1.500 4h13l-1.500 13h-10z" fill="#777" stroke="#333"/><ellipse cx="8" cy="4" rx="7" ry="3" fill="#aaa" stroke="#333"/><ellipse cx="8" cy="3" rx="2.500" ry="1" fill="#333"/><path d="M4.500 8v8M7 8.500v8M9.500 8.500v8M12 8v8" stroke="#444" stroke-width=".8"/></svg>
<div class="t " style="left:1862px;top:435.5px;">Delete</div>
<div class="panel" style="left:1632px;top:468px;width:286px;height:233px"></div>
<svg style="left:1636px;top:474px" width="12" height="11" viewBox="0 0 12 11"><rect x=".75" y=".75" width="10" height="9.500" rx="1.500" fill="#fff" stroke="#000" stroke-width="1.300"/><path d="M3 4.500h5.500l-2.750 3.500z" fill="#000"/></svg>
<svg style="left:1650px;top:470px" width="16" height="15" viewBox="0 0 16 15"><rect x=".5" y=".5" width="15" height="14" fill="#f8f8f8" stroke="#aaa"/><path d="M4 4l2 6" stroke="#222"/><rect x="2.5" y="2.5" width="2.5" height="2.5" fill="#fff" stroke="#e03010" stroke-width="1"/><rect x="7" y="4.5" width="2.5" height="2.5" fill="#fff" stroke="#e03010" stroke-width="1"/><rect x="5" y="9.5" width="2.5" height="2.5" fill="#fff" stroke="#e03010" stroke-width="1"/><rect x="12" y="1" width="3" height="13" fill="#eee" stroke="#bbb" stroke-width=".5"/></svg>
<div class="t " style="left:1674px;top:469.0px;letter-spacing:.12px">Sel.: Rel.:0 / Ways:1 / Nodes:0</div>
<div class="sbtn" style="left:1886px;top:472px;width:14px;height:14px"></div><svg style="left:1885px;top:474px" width="16" height="10" viewBox="0 0 16 10"><path d="M0 5l6-.8v1.600z" fill="#a8a8a8"/><path d="M7 1v8" stroke="#333" stroke-width="1.600"/><path d="M8 2.500h4v5H8z" fill="#a0a0a0" stroke="#666" stroke-width=".6"/><path d="M13 .3v9.400" stroke="#333" stroke-width="1.300"/></svg><div class="sbtn" style="left:1902px;top:472px;width:14px;height:14px"></div><svg style="left:1904px;top:474px" width="10" height="10" viewBox="0 0 10 10"><rect x=".6" y=".6" width="8.800" height="8.800" rx="1.500" fill="#8c8c86" stroke="#7c7c76" stroke-width="1"/><path d="M2.300 2.300l5.400 5.400M7.700 2.300l-5.400 5.400" stroke="#fff" stroke-width="2"/></svg>
<div class="box" style="left:1634px;top:489px;width:283px;height:178px"></div>
<svg style="left:1637px;top:492px" width="16" height="14" viewBox="0 0 16 14"><path d="M2 3.500L13 2l-2 8.500-5 1.500z" fill="none" stroke="#222" stroke-width="1.200"/><rect x="0.5" y="2" width="3" height="3" fill="#fff" stroke="#e03010" stroke-width="1"/><rect x="11.5" y="0.5" width="3" height="3" fill="#fff" stroke="#e03010" stroke-width="1"/><rect x="9" y="9" width="3" height="3" fill="#fff" stroke="#e03010" stroke-width="1"/><rect x="4" y="10.5" width="3" height="3" fill="#fff" stroke="#e03010" stroke-width="1"/></svg>
<div class="t " style="left:1655px;top:490.5px;letter-spacing:-.02px">314010525 (62 nodes) [id: 314,010,525]</div>
<div class="btn dis" style="left:1635px;top:670px;width:92px;height:29px"></div>
<div class="btn " style="left:1729px;top:670px;width:92px;height:29px"></div>
<div class="btn " style="left:1823px;top:670px;width:92px;height:29px"></div>
<svg style="left:1652px;top:674px" width="20" height="20" viewBox="0 0 20 20"><rect x="2" y="2" width="15" height="15" fill="none" stroke="#aaa" stroke-dasharray="1.500 1.500"/><g fill="#888"><rect x="1" y="1" width="2.500" height="2.500"/><rect x="16" y="1" width="2.500" height="2.500"/><rect x="1" y="16" width="2.500" height="2.500"/><rect x="16" y="16" width="2.500" height="2.500"/></g><path d="M8 8l9 5-4 .8 2 4-1.500.7-2-4-3 3z" fill="#aaa" stroke="#888" stroke-width=".5"/></svg>
<div class="t " style="left:1674px;top:675.5px;color:#b0b0b0">Selec</div>
<div class="a" style="left:1707px;top:675px;width:14px;height:19px;background:#e4e5e7"></div>
<svg style="left:1710px;top:681px" width="8" height="5" viewBox="0 0 8 5"><path d="M0 0h8l-4 5z" fill="#000"/></svg>
<svg style="left:1746px;top:676px" width="18" height="18" viewBox="0 0 18 18"><path d="M1.500 1.500h9v12h-9z" fill="#f0f0f0" stroke="#aaa"/><circle cx="10" cy="10.500" r="4" fill="#cfe1f5" stroke="#6a8ab0" stroke-width="1.500"/><path d="M13 13.500l3.500 3.500" stroke="#777" stroke-width="2.200" stroke-linecap="round"/></svg>
<div class="t " style="left:1766px;top:675.5px;">Searc</div>
<div class="a" style="left:1801px;top:675px;width:14px;height:19px;background:#e4e5e7"></div>
<svg style="left:1804px;top:681px" width="8" height="5" viewBox="0 0 8 5"><path d="M0 0h8l-4 5z" fill="#000"/></svg>
<svg style="left:1838px;top:676px" width="19" height="17" viewBox="0 0 19 17"><path d="M3 1h14l1.500 13H1z" fill="#3a62b8" stroke="#1a3a80"/><rect x="5" y="2.500" width="9" height="3" fill="#f0e040"/><path d="M1 14h17.500v2.500H1z" fill="#ddd" stroke="#888" stroke-width=".6"/></svg>
<div class="t " style="left:1860px;top:675.5px;">History</div>
<div class="panel" style="left:1632px;top:708px;width:286px;height:234px"></div>
<svg style="left:1636px;top:714px" width="12" height="11" viewBox="0 0 12 11"><rect x=".75" y=".75" width="10" height="9.500" rx="1.500" fill="#fff" stroke="#000" stroke-width="1.300"/><path d="M3 4.500h5.500l-2.750 3.500z" fill="#000"/></svg>
<svg style="left:1650px;top:710px" width="16" height="15" viewBox="0 0 16 15"><rect x=".5" y=".5" width="15" height="14" fill="#f6f6f6" stroke="#d4d4d4"/><circle cx="4" cy="12" r="2.500" fill="#fff"/><circle cx="9" cy="5" r="2" fill="#e8e8e8"/></svg>
<div class="t " style="left:1674px;top:709.5px;letter-spacing:.03px">Relations: 25</div>
<div class="sbtn" style="left:1886px;top:712px;width:14px;height:14px"></div><svg style="left:1885px;top:714px" width="16" height="10" viewBox="0 0 16 10"><path d="M0 5l6-.8v1.600z" fill="#a8a8a8"/><path d="M7 1v8" stroke="#333" stroke-width="1.600"/><path d="M8 2.500h4v5H8z" fill="#a0a0a0" stroke="#666" stroke-width=".6"/><path d="M13 .3v9.400" stroke="#333" stroke-width="1.300"/></svg><div class="sbtn" style="left:1902px;top:712px;width:14px;height:14px"></div><svg style="left:1904px;top:714px" width="10" height="10" viewBox="0 0 10 10"><rect x=".6" y=".6" width="8.800" height="8.800" rx="1.500" fill="#8c8c86" stroke="#7c7c76" stroke-width="1"/><path d="M2.300 2.300l5.400 5.400M7.700 2.300l-5.400 5.400" stroke="#fff" stroke-width="2"/></svg>
<div class="box" style="left:1635px;top:730px;width:281px;height:24px;border-color:#8e8f91;box-shadow:inset 0 1px 0 #d4d5d7"></div>
<div class="box" style="left:1634px;top:755px;width:266px;height:136px;overflow:hidden" id="rellist"></div>
<div class="a" style="left:1635px;top:756px;width:264px;height:134px;overflow:hidden">
<div class="t" style="left:21px;top:0.5px;letter-spacing:.06px">associatedStreet ("Himmelsruh", 44 members)</div>
<svg style="left:1px;top:3px" width="16" height="12" viewBox="0 0 16 12"><rect x=".5" y=".5" width="15" height="11" fill="#1a2a90" stroke="#6a78c8" stroke-width=".8" stroke-dasharray="1 1"/><text x="8" y="9.500" font-size="9.500" font-weight="bold" font-family="Liberation Serif,serif" fill="#fff" text-anchor="middle">41</text></svg>
<div class="t" style="left:21px;top:18.5px;letter-spacing:.06px">associatedStreet ("Kehrstraße", 34 members)</div>
<svg style="left:1px;top:21px" width="16" height="12" viewBox="0 0 16 12"><rect x=".5" y=".5" width="15" height="11" fill="#1a2a90" stroke="#6a78c8" stroke-width=".8" stroke-dasharray="1 1"/><text x="8" y="9.500" font-size="9.500" font-weight="bold" font-family="Liberation Serif,serif" fill="#fff" text-anchor="middle">41</text></svg>
<div class="t" style="left:21px;top:36.5px;letter-spacing:.06px">associatedStreet ("Mittelberg", 70 members)</div>
<svg style="left:1px;top:39px" width="16" height="12" viewBox="0 0 16 12"><rect x=".5" y=".5" width="15" height="11" fill="#1a2a90" stroke="#6a78c8" stroke-width=".8" stroke-dasharray="1 1"/><text x="8" y="9.500" font-size="9.500" font-weight="bold" font-family="Liberation Serif,serif" fill="#fff" text-anchor="middle">41</text></svg>
<div class="t" style="left:21px;top:54.5px;letter-spacing:.06px">associatedStreet ("Mittelbergring", 74 members)</div>
<svg style="left:1px;top:57px" width="16" height="12" viewBox="0 0 16 12"><rect x=".5" y=".5" width="15" height="11" fill="#1a2a90" stroke="#6a78c8" stroke-width=".8" stroke-dasharray="1 1"/><text x="8" y="9.500" font-size="9.500" font-weight="bold" font-family="Liberation Serif,serif" fill="#fff" text-anchor="middle">41</text></svg>
<div class="t" style="left:21px;top:72.5px;letter-spacing:.06px">associatedStreet ("Sandersbeek", 38 members)</div>
<svg style="left:1px;top:75px" width="16" height="12" viewBox="0 0 16 12"><rect x=".5" y=".5" width="15" height="11" fill="#1a2a90" stroke="#6a78c8" stroke-width=".8" stroke-dasharray="1 1"/><text x="8" y="9.500" font-size="9.500" font-weight="bold" font-family="Liberation Serif,serif" fill="#fff" text-anchor="middle">41</text></svg>
<div class="t" style="left:21px;top:90.5px;letter-spacing:.06px">associatedStreet ("Weidenbreite", 26 members)</div>
<svg style="left:1px;top:93px" width="16" height="12" viewBox="0 0 16 12"><rect x=".5" y=".5" width="15" height="11" fill="#1a2a90" stroke="#6a78c8" stroke-width=".8" stroke-dasharray="1 1"/><text x="8" y="9.500" font-size="9.500" font-weight="bold" font-family="Liberation Serif,serif" fill="#fff" text-anchor="middle">41</text></svg>
<div class="t" style="left:21px;top:108.5px;letter-spacing:.06px">multipolygon ("Himmelsruh", 8 members, incomplete)</div>
<svg style="left:3px;top:110px" width="12" height="14" viewBox="0 0 12 14"><path d="M6 0l6 6h-1.500v8h-9V6H0z" fill="#e2e2e4"/></svg>
<div class="t" style="left:21px;top:126.5px;letter-spacing:.06px">multipolygon ("Mittelberg", 8 members, incomplete)</div>
<svg style="left:3px;top:128px" width="12" height="14" viewBox="0 0 12 14"><path d="M6 0l6 6h-1.500v8h-9V6H0z" fill="#e2e2e4"/></svg>
</div>
<div class="a" style="left:1902px;top:755px;width:15px;height:136px;background:#e2e3e5;border:1px solid #c8c9cb"></div>
<div class="sbtn" style="left:1902px;top:755px;width:15px;height:15px"></div>
<svg style="left:1905px;top:759px" width="9" height="6" viewBox="0 0 9 6"><path d="M1 5l3.500-3.500L8 5" stroke="#333" stroke-width="1.300" fill="none"/></svg>
<div class="a" style="left:1903px;top:770px;width:13px;height:31px;background:linear-gradient(90deg,#5e5f61,#7c7d7f)"></div>
<div class="sbtn" style="left:1902px;top:876px;width:15px;height:15px"></div>
<svg style="left:1905px;top:881px" width="9" height="6" viewBox="0 0 9 6"><path d="M1 1l3.500 3.500L8 1" stroke="#333" stroke-width="1.300" fill="none"/></svg>
<div class="a" style="left:1634px;top:894px;width:265px;height:15px;background:#e2e3e5;border:1px solid #c8c9cb"></div>
<div class="sbtn" style="left:1634px;top:894px;width:15px;height:15px"></div>
<svg style="left:1638px;top:897px" width="6" height="9" viewBox="0 0 6 9"><path d="M5 1L1.500 4.500 5 8" stroke="#333" stroke-width="1.300" fill="none"/></svg>
<div class="a" style="left:1649px;top:895px;width:94px;height:13px;background:linear-gradient(#5e5f61,#7c7d7f)"></div>
<div class="sbtn" style="left:1884px;top:894px;width:15px;height:15px"></div>
<svg style="left:1889px;top:897px" width="6" height="9" viewBox="0 0 6 9"><path d="M1 1l3.500 3.500L1 8" stroke="#333" stroke-width="1.300" fill="none"/></svg>
<div class="btn " style="left:1636px;top:911px;width:54px;height:29px"></div>
<div class="btn dis" style="left:1692px;top:911px;width:54px;height:29px"></div>
<div class="btn dis" style="left:1748px;top:911px;width:54px;height:29px"></div>
<div class="btn dis" style="left:1804px;top:911px;width:54px;height:29px"></div>
<div class="btn dis" style="left:1860px;top:911px;width:54px;height:29px"></div>
<svg style="left:1653px;top:915px" width="20" height="21" viewBox="0 0 20 21"><path d="M11 0l1.500 2.500 2.500-1 .5 3 3 .5-1 2.500L20 9l-2.500 1.500 1 2.500-3 .5-.5 3-2.500-1L11 18l-1.500-2.500-2.500 1-.5-3-3-.5 1-2.500L2 9l2.500-1.500-1-2.500 3-.5.5-3 2.500 1z" fill="#c8c8c8" stroke="#999" stroke-width=".6"/><circle cx="12" cy="8" r="2.500" fill="#fff"/><path d="M4 9h3v4.500h4.500v3H7V21H4v-4.500H0v-3h4z" fill="#e0e0e0" stroke="#888" stroke-width=".8"/></svg>
<svg style="left:1711px;top:916px" width="17" height="18" viewBox="0 0 17 18"><path d="M1 1h11l4 5-2 3v8H1z" fill="#a0a0a0"/><path d="M3 5h8M3 7.500h8M3 10h8M3 12.500h5" stroke="#b4b4b4"/></svg>
<svg style="left:1765px;top:914px" width="19" height="21" viewBox="0 0 19 21"><path d="M1 1h7l3 3v9H1z" fill="#a0a0a0"/><path d="M8 8h7l3 3v9H8z" fill="#a0a0a0" stroke="#bbb" stroke-width=".6"/><path d="M5 6c0 5 3 7 7 7v-2l4 3.500-4 3.500v-2c-5 0-9-3-9-10z" fill="#8a8a8a" stroke="#c0c0c0" stroke-width=".5"/></svg>
<svg style="left:1822px;top:916px" width="16" height="18" viewBox="0 0 16 18"><path d="M1.500 4h13l-1.500 13h-10z" fill="#9a9a9a" stroke="#8a8a8a"/><ellipse cx="8" cy="4" rx="7" ry="3" fill="#b4b4b4" stroke="#8a8a8a"/><ellipse cx="8" cy="3" rx="2.500" ry="1" fill="#8a8a8a"/></svg>
<svg style="left:1877px;top:915px" width="19" height="19" viewBox="0 0 19 19"><rect x="2" y="2" width="15" height="15" fill="none" stroke="#aaa" stroke-dasharray="1.500 1.500"/><g fill="#888"><rect x="1" y="1" width="2.500" height="2.500"/><rect x="16" y="1" width="2.500" height="2.500"/><rect x="1" y="16" width="2.500" height="2.500"/><rect x="16" y="16" width="2.500" height="2.500"/></g><path d="M8 8l9 5-4 .8 2 4-1.500.7-2-4-3 3z" fill="#aaa" stroke="#888" stroke-width=".5"/></svg>
<div class="panel" style="left:1632px;top:943px;width:286px;height:21px;border-bottom:none"></div>
<svg style="left:1637px;top:950px" width="12" height="11" viewBox="0 0 12 11"><rect x=".75" y=".75" width="10" height="9.500" rx="1.500" fill="#fff" stroke="#000" stroke-width="1.300"/><path d="M4.500 2.500v6l4-3z" fill="#000"/></svg>
<div class="t " style="left:1674px;top:944.5px;letter-spacing:.02px">Validation Results</div>
<div class="sbtn" style="left:1870px;top:947px;width:14px;height:14px;background:#e4e5e7"></div><svg style="left:1872px;top:950px" width="10" height="8" viewBox="0 0 10 8"><rect x="1.500" y="1" width="2" height="6" fill="#fff" stroke="#999" stroke-width=".7"/><rect x="6.500" y="1" width="2" height="6" fill="#fff" stroke="#999" stroke-width=".7"/></svg><div class="sbtn" style="left:1886px;top:947px;width:14px;height:14px"></div><svg style="left:1885px;top:949px" width="16" height="10" viewBox="0 0 16 10"><path d="M0 5l6-.8v1.600z" fill="#a8a8a8"/><path d="M7 1v8" stroke="#333" stroke-width="1.600"/><path d="M8 2.500h4v5H8z" fill="#a0a0a0" stroke="#666" stroke-width=".6"/><path d="M13 .3v9.400" stroke="#333" stroke-width="1.300"/></svg><div class="sbtn" style="left:1902px;top:947px;width:14px;height:14px"></div><svg style="left:1904px;top:949px" width="10" height="10" viewBox="0 0 10 10"><rect x=".6" y=".6" width="8.800" height="8.800" rx="1.500" fill="#8c8c86" stroke="#7c7c76" stroke-width="1"/><path d="M2.300 2.300l5.400 5.400M7.700 2.300l-5.400 5.400" stroke="#fff" stroke-width="2"/></svg>
<div class="panel" style="left:1632px;top:963px;width:286px;height:21px;border-bottom:none"></div>
<svg style="left:1637px;top:970px" width="12" height="11" viewBox="0 0 12 11"><rect x=".75" y=".75" width="10" height="9.500" rx="1.500" fill="#fff" stroke="#000" stroke-width="1.300"/><path d="M4.500 2.500v6l4-3z" fill="#000"/></svg>
<div class="t " style="left:1674px;top:964.5px;letter-spacing:.02px">Notes</div>
<div class="sbtn" style="left:1886px;top:967px;width:14px;height:14px"></div><svg style="left:1885px;top:969px" width="16" height="10" viewBox="0 0 16 10"><path d="M0 5l6-.8v1.600z" fill="#a8a8a8"/><path d="M7 1v8" stroke="#333" stroke-width="1.600"/><path d="M8 2.500h4v5H8z" fill="#a0a0a0" stroke="#666" stroke-width=".6"/><path d="M13 .3v9.400" stroke="#333" stroke-width="1.300"/></svg><div class="sbtn" style="left:1902px;top:967px;width:14px;height:14px"></div><svg style="left:1904px;top:969px" width="10" height="10" viewBox="0 0 10 10"><rect x=".6" y=".6" width="8.800" height="8.800" rx="1.500" fill="#8c8c86" stroke="#7c7c76" stroke-width="1"/><path d="M2.300 2.300l5.400 5.400M7.700 2.300l-5.400 5.400" stroke="#fff" stroke-width="2"/></svg>
<div class="panel" style="left:1632px;top:983px;width:286px;height:21px;border-bottom:none"></div>
<svg style="left:1637px;top:990px" width="12" height="11" viewBox="0 0 12 11"><rect x=".75" y=".75" width="10" height="9.500" rx="1.500" fill="#fff" stroke="#000" stroke-width="1.300"/><path d="M4.500 2.500v6l4-3z" fill="#000"/></svg>
<div class="t " style="left:1674px;top:984.5px;letter-spacing:.02px">Measured values</div>
<div class="sbtn" style="left:1886px;top:987px;width:14px;height:14px"></div><svg style="left:1885px;top:989px" width="16" height="10" viewBox="0 0 16 10"><path d="M0 5l6-.8v1.600z" fill="#a8a8a8"/><path d="M7 1v8" stroke="#333" stroke-width="1.600"/><path d="M8 2.500h4v5H8z" fill="#a0a0a0" stroke="#666" stroke-width=".6"/><path d="M13 .3v9.400" stroke="#333" stroke-width="1.300"/></svg><div class="sbtn" style="left:1902px;top:987px;width:14px;height:14px"></div><svg style="left:1904px;top:989px" width="10" height="10" viewBox="0 0 10 10"><rect x=".6" y=".6" width="8.800" height="8.800" rx="1.500" fill="#8c8c86" stroke="#7c7c76" stroke-width="1"/><path d="M2.300 2.300l5.400 5.400M7.700 2.300l-5.400 5.400" stroke="#fff" stroke-width="2"/></svg>
<svg style="left:1650px;top:945px" width="17" height="15" viewBox="0 0 17 15"><path d="M1 8l3-2 2.500 4C9 5 12 2 16 0l.3 1C12 5 9 10 7.500 15H5.500z" fill="#1763a8" stroke="#0a3a70" stroke-width=".5"/></svg>
<svg style="left:1652px;top:965px" width="11" height="16" viewBox="0 0 11 16"><path d="M5.500 15.500C3 10 .5 8 .5 5a5 5 0 0 1 10 0c0 3-2.500 5-5 10.500z" fill="#e02828" stroke="#a01010" stroke-width=".6"/><path d="M3.500 3l4 4M7.500 3l-4 4" stroke="#fff" stroke-width="1.300"/></svg>
<svg style="left:1650px;top:985px" width="17" height="16" viewBox="0 0 17 16"><path d="M1 11L12 1l4 4L5 15z" fill="#555" stroke="#222"/><path d="M4 10l1.500 1.500M6 8l1.500 1.500M8 6l1.500 1.500M10 4l1.500 1.500" stroke="#ddd" stroke-width=".9"/></svg>
<div class="a" style="left:0;top:1003px;width:1920px;height:29px;background:#ecedef"></div>
<div class="stat" style="left:2px;width:109px"></div>
<div class="stat" style="left:114px;width:116px"></div>
<div class="stat" style="left:233px;width:67px"></div>
<div class="stat" style="left:303px;width:67px"></div>
<div class="stat" style="left:372px;width:96px"></div>
<div class="stat" style="left:471px;width:165px"></div>
<svg style="left:3px;top:1010px" width="17" height="17" viewBox="0 0 17 17"><circle cx="8" cy="8" r="7.300" fill="none" stroke="#222" stroke-width="1"/><path d="M0 8h16.500" stroke="#e03010" stroke-width="1.600"/></svg>
<div class="t " style="left:22.5px;top:1009.5px;letter-spacing:.15px">51.516405</div>
<svg style="left:115px;top:1010px" width="17" height="17" viewBox="0 0 17 17"><circle cx="8" cy="8" r="7.300" fill="none" stroke="#222" stroke-width="1"/><path d="M8 0v16.500" stroke="#e03010" stroke-width="1.600"/></svg>
<div class="t " style="left:134.5px;top:1009.5px;letter-spacing:.15px">9.9630897</div>
<svg style="left:234px;top:1010px" width="17" height="17" viewBox="0 0 17 17"><circle cx="8" cy="8.500" r="7" fill="none" stroke="#222" stroke-width="1"/><path d="M8 8.500l6.500-7" stroke="#e03010" stroke-width="1.600"/></svg>
<svg style="left:304px;top:1011px" width="18" height="14" viewBox="0 0 18 14"><path d="M1 12.500h16M1 12.500L12 1" stroke="#000" stroke-width="1.600" fill="none"/><path d="M10 5c2 2 3 4 3.500 7" stroke="#222" stroke-width=".8" stroke-dasharray="1 1" fill="none"/></svg>
<svg style="left:373px;top:1015px" width="18" height="10" viewBox="0 0 18 10"><rect x=".5" y="1.500" width="17" height="8" fill="#fff" stroke="#222"/><path d="M3 9.500v-3M5.500 9.500v-4M8 9.500v-3M10.500 9.500v-4M13 9.500v-3M15.500 9.500v-4" stroke="#222" stroke-width=".8"/></svg>
<div class="t " style="left:394.5px;top:1009.5px;letter-spacing:.3px">1.8 km</div>
<svg style="left:472px;top:1008px" width="18" height="20" viewBox="0 0 18 20"><path d="M1 13L11 2" stroke="#e03010" stroke-width="1.400"/><path d="M2 13l3 5M11 2l3 4" stroke="#333" stroke-width=".8"/><rect x="0" y="15.5" width="2.5" height="2.5" fill="#fff" stroke="#333" stroke-width="1"/><rect x="9.5" y="0.5" width="2.5" height="2.5" fill="#fff" stroke="#333" stroke-width="1"/><path d="M8 4v12l3-3 2 5 2-1-2-5h4z" fill="#fff" stroke="#000" stroke-width=".9"/></svg>
<div class="t " style="left:492.5px;top:1009.5px;letter-spacing:.2px">(no object)</div>
<div class="box" style="left:639px;top:1007px;width:1278px;height:22px;border-color:#8e8f91;background:#ecedef;box-shadow:inset 0 1px 0 #d4d5d7"></div>
<div class="t " style="left:645px;top:1009.5px;letter-spacing:.055px">Move objects by dragging; Shift to add to selection (Ctrl to toggle); Shift-Ctrl to rotate selected; Alt-Ctrl to scale selected; or change selection</div>
</div>
</body></html>
